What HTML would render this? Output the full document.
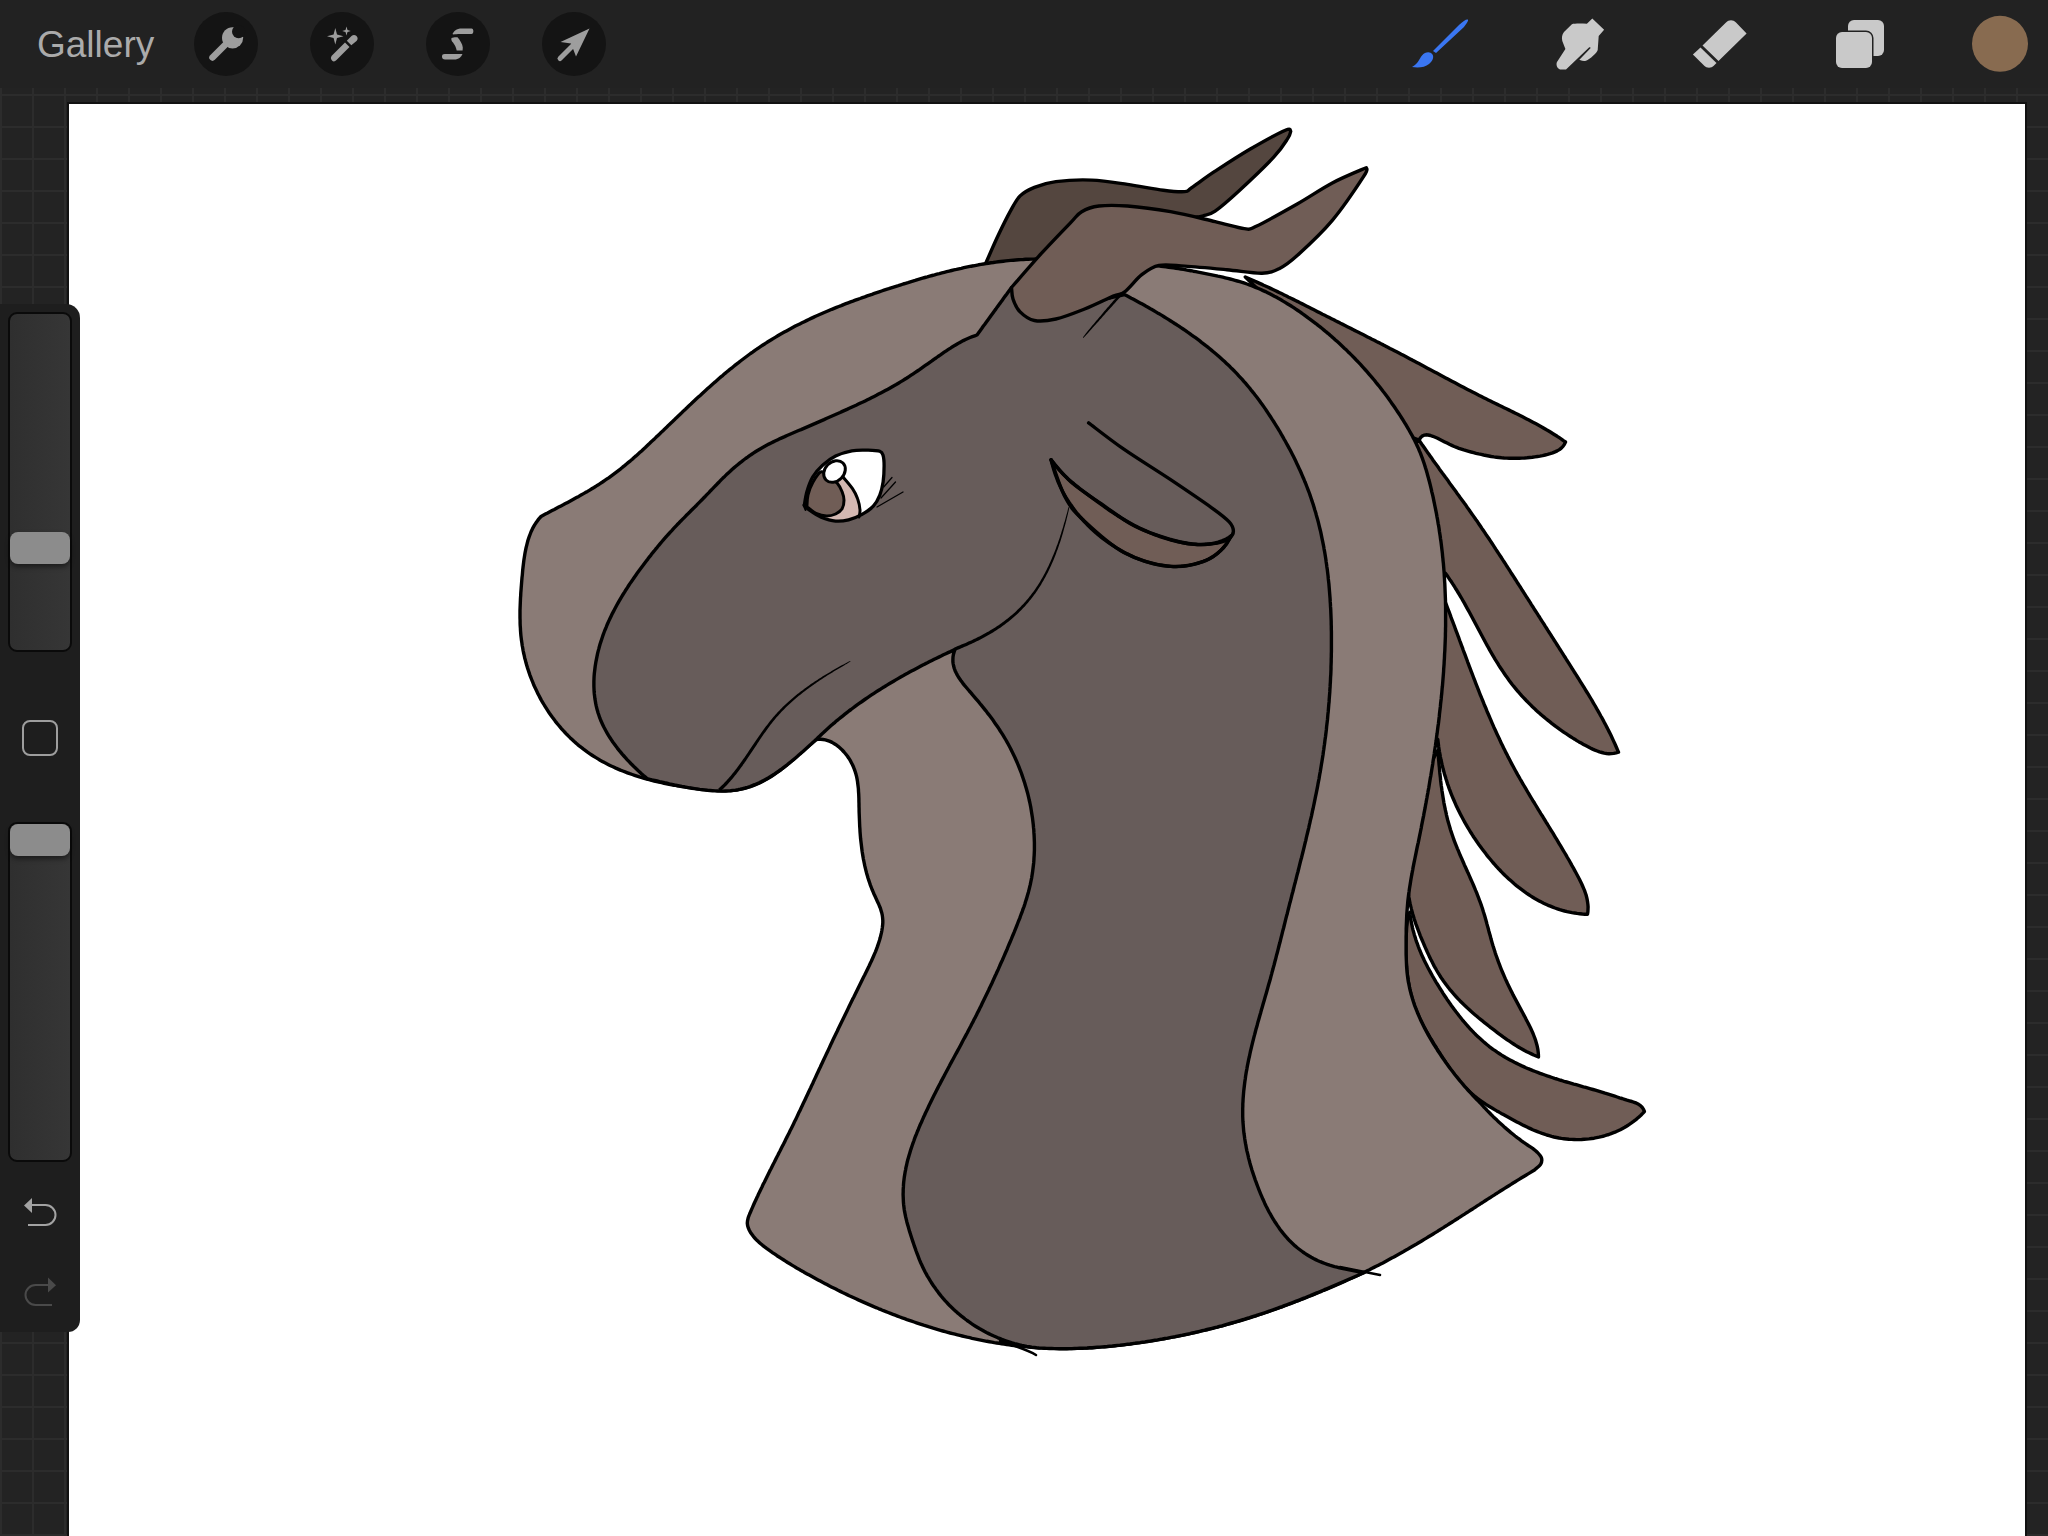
<!DOCTYPE html>
<html><head><meta charset="utf-8">
<style>
html,body{margin:0;padding:0;width:2048px;height:1536px;overflow:hidden;background:#232323;font-family:"Liberation Sans",sans-serif}
#grid{position:absolute;left:0;top:88px;width:2048px;height:1448px;
background-color:#232323;
background-image:linear-gradient(to right, #2c2c2c 2px, transparent 2px),linear-gradient(to bottom, #2c2c2c 2px, transparent 2px);
background-size:32px 32px;background-position:0px 6px}
#canvas{position:absolute;left:69px;top:104px;width:1956px;height:1432px;background:#fff;box-shadow:0 0 0 2px #111}
#top{position:absolute;left:0;top:0;width:2048px;height:88px;background:#222222}
#gal{position:absolute;left:37px;top:24px;font-size:37px;color:#ababab;letter-spacing:0px}
.circ{position:absolute;top:12px;width:64px;height:64px;border-radius:50%;background:#141414}
#side{position:absolute;left:0;top:304px;width:80px;height:1028px;background:#1e1e1e;border-radius:0 14px 12px 0}
.slider{position:absolute;box-sizing:border-box;left:8px;width:64px;border-radius:9px;background:linear-gradient(to right,#2f2f2f,#363636);border:2px solid #0a0a0a}
.thumb{position:absolute;left:10px;width:60px;height:32px;border-radius:8px;background:#8c8c8c;box-shadow:0 3px 5px rgba(0,0,0,.45)}
#sq{position:absolute;left:22px;top:720px;width:32px;height:32px;border:2px solid #9e9e9e;border-radius:8px}
</style></head><body>
<div id="grid"></div>
<div id="canvas"></div>
<svg width="2048" height="1536" viewBox="0 0 2048 1536" style="position:absolute;left:0;top:0">
<g stroke="#000" stroke-width="3.4" stroke-linejoin="round" stroke-linecap="round">
<path d="M1245.3,277.0 L1247.6,278.0 L1249.9,279.0 L1252.2,280.0 L1254.5,281.0 L1256.9,282.1 L1259.1,283.1 L1261.4,284.1 L1263.7,285.2 L1266.0,286.2 L1268.3,287.3 L1270.6,288.4 L1272.9,289.5 L1275.1,290.5 L1277.4,291.6 L1279.7,292.7 L1282.0,293.8 L1284.2,294.9 L1286.5,296.0 L1288.7,297.2 L1291.0,298.3 L1293.3,299.4 L1295.5,300.5 L1297.8,301.6 L1300.0,302.8 L1302.3,303.9 L1304.5,305.0 L1306.8,306.2 L1309.0,307.3 L1311.3,308.5 L1313.5,309.6 L1315.8,310.7 L1318.0,311.9 L1320.3,313.0 L1322.5,314.2 L1324.8,315.3 L1327.0,316.4 L1329.3,317.6 L1331.5,318.7 L1333.8,319.8 L1336.0,321.0 L1338.3,322.1 L1340.5,323.3 L1342.8,324.4 L1345.0,325.5 L1347.3,326.7 L1349.5,327.8 L1351.8,328.9 L1354.0,330.1 L1356.3,331.2 L1358.5,332.3 L1360.8,333.5 L1363.0,334.6 L1365.3,335.8 L1367.5,336.9 L1369.8,338.0 L1372.0,339.2 L1374.3,340.3 L1376.5,341.5 L1378.8,342.6 L1381.0,343.8 L1383.3,344.9 L1385.5,346.1 L1387.8,347.2 L1390.0,348.4 L1392.2,349.5 L1394.5,350.7 L1396.7,351.8 L1399.0,353.0 L1401.2,354.2 L1403.4,355.3 L1405.7,356.5 L1407.9,357.7 L1410.1,358.9 L1412.3,360.1 L1414.6,361.2 L1416.8,362.4 L1419.0,363.6 L1421.2,364.8 L1423.5,366.0 L1425.7,367.2 L1427.9,368.4 L1430.1,369.6 L1432.3,370.7 L1434.6,371.9 L1436.8,373.1 L1439.0,374.3 L1441.2,375.5 L1443.5,376.7 L1445.7,377.9 L1447.9,379.1 L1450.1,380.3 L1452.4,381.5 L1454.6,382.6 L1456.8,383.8 L1459.0,385.0 L1461.3,386.2 L1463.5,387.3 L1465.7,388.5 L1468.0,389.7 L1470.2,390.8 L1472.5,392.0 L1474.7,393.1 L1477.0,394.3 L1479.2,395.4 L1481.5,396.6 L1483.7,397.7 L1486.0,398.8 L1488.2,399.9 L1490.5,401.0 L1492.8,402.2 L1495.0,403.3 L1497.3,404.4 L1499.6,405.5 L1501.8,406.6 L1504.1,407.7 L1506.4,408.8 L1508.7,409.9 L1510.9,411.0 L1513.2,412.1 L1515.4,413.2 L1517.7,414.3 L1520.0,415.5 L1522.2,416.6 L1524.4,417.7 L1526.7,418.9 L1528.9,420.0 L1531.1,421.2 L1533.4,422.4 L1535.6,423.6 L1537.8,424.8 L1540.0,426.0 L1542.2,427.2 L1544.3,428.5 L1546.5,429.8 L1548.7,431.0 L1550.8,432.3 L1553.0,433.7 L1555.1,435.0 L1557.2,436.3 L1559.3,437.7 L1561.4,439.1 L1563.4,440.6 L1565.5,442.0 L1565.5,442.0 L1564.4,444.4 L1563.0,446.4 L1561.3,448.1 L1559.4,449.6 L1557.2,450.9 L1555.0,451.9 L1552.6,452.9 L1550.1,453.7 L1547.6,454.4 L1545.1,455.0 L1542.6,455.6 L1540.0,456.1 L1537.4,456.5 L1534.9,456.9 L1532.3,457.3 L1529.7,457.5 L1527.1,457.8 L1524.6,458.0 L1522.0,458.1 L1519.4,458.2 L1516.9,458.3 L1514.3,458.3 L1511.7,458.3 L1509.2,458.2 L1506.6,458.1 L1504.1,458.0 L1501.5,457.8 L1499.0,457.5 L1496.4,457.2 L1493.9,456.9 L1491.3,456.5 L1488.8,456.0 L1486.2,455.5 L1483.7,455.0 L1481.2,454.4 L1478.6,453.9 L1476.1,453.3 L1473.6,452.6 L1471.2,452.0 L1468.7,451.3 L1466.3,450.6 L1463.8,449.9 L1461.4,449.1 L1459.0,448.3 L1456.6,447.4 L1454.2,446.5 L1451.8,445.4 L1449.4,444.3 L1447.1,443.1 L1444.7,441.9 L1442.3,440.7 L1439.9,439.5 L1437.6,438.3 L1435.2,437.3 L1432.8,436.3 L1430.5,435.5 L1428.2,435.0 L1426.0,434.8 L1424.0,435.2 L1422.1,436.1 L1420.5,437.7 L1419.0,440.0 L1380.0,425.0 L1300.0,330.0 Z" fill="#705d56"/>
<path d="M1419.0,440.0 L1420.4,442.1 L1421.8,444.2 L1423.3,446.3 L1424.7,448.3 L1426.2,450.4 L1427.6,452.5 L1429.1,454.5 L1430.5,456.6 L1432.0,458.6 L1433.4,460.7 L1434.9,462.8 L1436.4,464.8 L1437.9,466.8 L1439.3,468.9 L1440.8,470.9 L1442.3,473.0 L1443.8,475.0 L1445.3,477.1 L1446.8,479.1 L1448.3,481.1 L1449.7,483.2 L1451.2,485.2 L1452.7,487.3 L1454.2,489.3 L1455.7,491.3 L1457.2,493.4 L1458.7,495.4 L1460.1,497.5 L1461.6,499.5 L1463.1,501.5 L1464.6,503.6 L1466.1,505.6 L1467.5,507.7 L1469.0,509.7 L1470.4,511.8 L1471.9,513.9 L1473.3,515.9 L1474.8,518.0 L1476.2,520.1 L1477.7,522.1 L1479.1,524.2 L1480.5,526.3 L1481.9,528.4 L1483.4,530.5 L1484.8,532.6 L1486.2,534.7 L1487.6,536.7 L1489.0,538.8 L1490.4,540.9 L1491.8,543.0 L1493.2,545.1 L1494.6,547.3 L1495.9,549.4 L1497.3,551.5 L1498.7,553.6 L1500.1,555.7 L1501.5,557.8 L1502.8,559.9 L1504.2,562.0 L1505.6,564.2 L1506.9,566.3 L1508.3,568.4 L1509.7,570.5 L1511.0,572.7 L1512.4,574.8 L1513.8,576.9 L1515.1,579.0 L1516.5,581.2 L1517.8,583.3 L1519.2,585.4 L1520.6,587.5 L1521.9,589.7 L1523.3,591.8 L1524.6,593.9 L1526.0,596.1 L1527.4,598.2 L1528.7,600.3 L1530.1,602.4 L1531.4,604.6 L1532.8,606.7 L1534.1,608.8 L1535.5,611.0 L1536.9,613.1 L1538.2,615.2 L1539.6,617.3 L1540.9,619.5 L1542.3,621.6 L1543.7,623.7 L1545.0,625.9 L1546.4,628.0 L1547.7,630.1 L1549.1,632.2 L1550.5,634.4 L1551.8,636.5 L1553.2,638.6 L1554.5,640.8 L1555.9,642.9 L1557.2,645.0 L1558.6,647.2 L1559.9,649.3 L1561.3,651.4 L1562.7,653.6 L1564.0,655.7 L1565.4,657.8 L1566.7,660.0 L1568.1,662.1 L1569.4,664.2 L1570.8,666.4 L1572.1,668.5 L1573.5,670.6 L1574.8,672.8 L1576.2,674.9 L1577.5,677.0 L1578.9,679.2 L1580.2,681.3 L1581.5,683.4 L1582.9,685.6 L1584.2,687.7 L1585.5,689.9 L1586.8,692.0 L1588.2,694.2 L1589.5,696.3 L1590.8,698.5 L1592.1,700.7 L1593.3,702.8 L1594.6,705.0 L1595.9,707.2 L1597.1,709.4 L1598.4,711.6 L1599.6,713.8 L1600.8,716.0 L1602.1,718.2 L1603.3,720.4 L1604.4,722.6 L1605.6,724.8 L1606.8,727.1 L1607.9,729.3 L1609.1,731.6 L1610.2,733.8 L1611.3,736.1 L1612.4,738.4 L1613.4,740.6 L1614.5,742.9 L1615.5,745.2 L1616.5,747.5 L1617.5,749.9 L1618.5,752.2 L1618.5,752.2 L1616.1,752.9 L1613.7,753.4 L1611.4,753.6 L1609.0,753.7 L1606.6,753.5 L1604.2,753.1 L1601.9,752.5 L1599.5,751.9 L1597.2,751.0 L1594.9,750.1 L1592.6,749.1 L1590.3,748.0 L1588.0,746.8 L1585.7,745.6 L1583.5,744.4 L1581.2,743.1 L1579.0,741.9 L1576.8,740.6 L1574.7,739.2 L1572.5,737.9 L1570.3,736.5 L1568.2,735.1 L1566.1,733.7 L1564.0,732.3 L1561.9,730.8 L1559.8,729.4 L1557.8,727.9 L1555.7,726.4 L1553.7,724.8 L1551.7,723.3 L1549.7,721.7 L1547.7,720.1 L1545.7,718.5 L1543.8,716.9 L1541.8,715.2 L1539.9,713.6 L1538.0,711.9 L1536.1,710.2 L1534.3,708.4 L1532.4,706.7 L1530.6,704.9 L1528.8,703.1 L1527.0,701.3 L1525.3,699.5 L1523.5,697.6 L1521.8,695.8 L1520.1,693.9 L1518.5,692.0 L1516.8,690.1 L1515.2,688.1 L1513.6,686.2 L1512.0,684.2 L1510.5,682.2 L1509.0,680.2 L1507.5,678.1 L1506.0,676.1 L1504.6,674.0 L1503.2,671.9 L1501.8,669.8 L1500.4,667.7 L1499.0,665.6 L1497.7,663.4 L1496.4,661.3 L1495.0,659.1 L1493.7,656.9 L1492.5,654.8 L1491.2,652.6 L1489.9,650.4 L1488.7,648.1 L1487.4,645.9 L1486.2,643.7 L1485.0,641.5 L1483.8,639.2 L1482.6,637.0 L1481.4,634.8 L1480.2,632.5 L1479.0,630.3 L1477.8,628.0 L1476.6,625.8 L1475.4,623.5 L1474.2,621.3 L1473.0,619.0 L1471.8,616.8 L1470.6,614.5 L1469.4,612.3 L1468.2,610.1 L1466.9,607.8 L1465.7,605.6 L1464.5,603.4 L1463.2,601.2 L1462.0,599.0 L1460.7,596.8 L1459.4,594.6 L1458.1,592.5 L1456.8,590.3 L1455.4,588.2 L1454.1,586.0 L1452.7,583.9 L1451.4,581.8 L1449.9,579.7 L1448.5,577.6 L1447.1,575.5 L1445.6,573.5 L1400.0,560.0 L1395.0,450.0 Z" fill="#705d56"/>
<path d="M1445.6,602.8 L1446.5,605.1 L1447.4,607.5 L1448.3,609.8 L1449.2,612.2 L1450.1,614.5 L1450.9,616.9 L1451.8,619.3 L1452.7,621.6 L1453.6,624.0 L1454.5,626.3 L1455.3,628.7 L1456.2,631.1 L1457.1,633.4 L1458.0,635.8 L1458.9,638.2 L1459.7,640.5 L1460.6,642.9 L1461.5,645.3 L1462.4,647.6 L1463.2,650.0 L1464.1,652.4 L1465.0,654.7 L1465.9,657.1 L1466.8,659.5 L1467.6,661.8 L1468.5,664.2 L1469.4,666.6 L1470.3,668.9 L1471.2,671.3 L1472.1,673.6 L1473.0,676.0 L1473.9,678.4 L1474.8,680.7 L1475.7,683.1 L1476.6,685.4 L1477.6,687.8 L1478.5,690.1 L1479.4,692.5 L1480.3,694.8 L1481.3,697.2 L1482.2,699.5 L1483.2,701.8 L1484.1,704.2 L1485.1,706.5 L1486.1,708.8 L1487.0,711.2 L1488.0,713.5 L1489.0,715.8 L1490.0,718.1 L1491.0,720.4 L1492.0,722.8 L1493.0,725.1 L1494.0,727.4 L1495.1,729.7 L1496.1,732.0 L1497.1,734.2 L1498.2,736.5 L1499.3,738.8 L1500.3,741.1 L1501.4,743.4 L1502.5,745.6 L1503.6,747.9 L1504.7,750.1 L1505.8,752.4 L1507.0,754.6 L1508.1,756.9 L1509.3,759.1 L1510.4,761.3 L1511.6,763.6 L1512.8,765.8 L1514.0,768.0 L1515.2,770.2 L1516.4,772.4 L1517.6,774.6 L1518.9,776.8 L1520.1,779.0 L1521.4,781.2 L1522.6,783.3 L1523.9,785.5 L1525.2,787.7 L1526.5,789.9 L1527.7,792.0 L1529.0,794.2 L1530.3,796.3 L1531.6,798.5 L1532.9,800.7 L1534.3,802.8 L1535.6,805.0 L1536.9,807.1 L1538.2,809.3 L1539.5,811.4 L1540.8,813.6 L1542.2,815.7 L1543.5,817.9 L1544.8,820.0 L1546.1,822.2 L1547.5,824.3 L1548.8,826.5 L1550.1,828.6 L1551.4,830.8 L1552.8,832.9 L1554.1,835.1 L1555.4,837.3 L1556.7,839.4 L1558.0,841.6 L1559.3,843.8 L1560.6,845.9 L1561.9,848.1 L1563.2,850.3 L1564.5,852.5 L1565.8,854.6 L1567.0,856.8 L1568.3,859.0 L1569.6,861.2 L1570.8,863.4 L1572.0,865.6 L1573.3,867.8 L1574.5,870.1 L1575.7,872.3 L1576.9,874.5 L1578.1,876.8 L1579.3,879.0 L1580.4,881.3 L1581.5,883.5 L1582.5,885.8 L1583.5,888.1 L1584.5,890.4 L1585.3,892.7 L1586.1,895.0 L1586.7,897.4 L1587.2,899.7 L1587.6,902.1 L1587.9,904.5 L1588.1,906.9 L1588.0,909.4 L1587.9,911.8 L1587.5,914.3 L1587.5,914.3 L1584.9,914.2 L1582.3,914.0 L1579.7,913.7 L1577.1,913.4 L1574.6,913.0 L1572.0,912.6 L1569.5,912.1 L1567.1,911.6 L1564.6,911.0 L1562.2,910.3 L1559.8,909.6 L1557.4,908.8 L1555.0,908.0 L1552.7,907.1 L1550.4,906.2 L1548.1,905.3 L1545.8,904.2 L1543.6,903.2 L1541.4,902.1 L1539.2,900.9 L1537.0,899.7 L1534.8,898.5 L1532.7,897.2 L1530.6,895.9 L1528.5,894.5 L1526.4,893.1 L1524.4,891.7 L1522.4,890.2 L1520.4,888.7 L1518.4,887.2 L1516.4,885.6 L1514.5,884.0 L1512.6,882.3 L1510.7,880.6 L1508.8,878.9 L1507.0,877.2 L1505.1,875.5 L1503.3,873.7 L1501.5,871.9 L1499.8,870.0 L1498.0,868.2 L1496.3,866.3 L1494.6,864.4 L1492.9,862.5 L1491.3,860.5 L1489.6,858.5 L1488.0,856.6 L1486.4,854.6 L1484.9,852.6 L1483.3,850.5 L1481.8,848.5 L1480.3,846.4 L1478.8,844.4 L1477.3,842.3 L1475.9,840.2 L1474.4,838.1 L1473.0,836.0 L1471.7,833.8 L1470.3,831.7 L1469.0,829.5 L1467.7,827.3 L1466.4,825.1 L1465.1,822.9 L1463.9,820.7 L1462.7,818.5 L1461.5,816.3 L1460.3,814.0 L1459.2,811.8 L1458.1,809.5 L1457.0,807.2 L1455.9,804.9 L1454.9,802.6 L1453.9,800.3 L1452.9,798.0 L1451.9,795.6 L1451.0,793.3 L1450.1,790.9 L1449.2,788.6 L1448.4,786.2 L1447.5,783.8 L1446.8,781.4 L1446.0,779.0 L1445.3,776.6 L1444.5,774.2 L1443.9,771.8 L1443.2,769.3 L1442.6,766.9 L1442.0,764.4 L1441.5,762.0 L1440.9,759.5 L1440.4,757.0 L1440.0,754.5 L1439.5,752.0 L1439.1,749.5 L1438.7,747.0 L1438.4,744.5 L1438.1,742.0 L1437.8,739.5 L1405.0,720.0 L1410.0,610.0 Z" fill="#705d56"/>
<path d="M1438.0,750.0 L1438.2,752.5 L1438.4,755.0 L1438.5,757.6 L1438.7,760.1 L1438.9,762.6 L1439.1,765.1 L1439.4,767.6 L1439.6,770.2 L1439.8,772.7 L1440.1,775.2 L1440.4,777.7 L1440.6,780.2 L1440.9,782.8 L1441.2,785.3 L1441.6,787.8 L1441.9,790.3 L1442.3,792.8 L1442.7,795.3 L1443.1,797.8 L1443.5,800.3 L1443.9,802.8 L1444.4,805.3 L1444.9,807.7 L1445.4,810.2 L1446.0,812.7 L1446.5,815.1 L1447.1,817.6 L1447.7,820.0 L1448.4,822.4 L1449.1,824.9 L1449.8,827.3 L1450.5,829.7 L1451.3,832.1 L1452.1,834.5 L1452.9,836.8 L1453.7,839.2 L1454.6,841.6 L1455.5,843.9 L1456.5,846.3 L1457.4,848.6 L1458.4,850.9 L1459.4,853.3 L1460.3,855.6 L1461.4,857.9 L1462.4,860.2 L1463.4,862.5 L1464.4,864.9 L1465.5,867.2 L1466.5,869.5 L1467.5,871.8 L1468.6,874.1 L1469.6,876.4 L1470.6,878.7 L1471.7,881.1 L1472.7,883.4 L1473.7,885.7 L1474.7,888.1 L1475.6,890.4 L1476.6,892.7 L1477.5,895.1 L1478.4,897.4 L1479.3,899.8 L1480.2,902.2 L1481.1,904.6 L1481.9,907.0 L1482.7,909.4 L1483.4,911.8 L1484.2,914.2 L1484.9,916.6 L1485.6,919.0 L1486.3,921.5 L1486.9,923.9 L1487.6,926.4 L1488.3,928.8 L1488.9,931.2 L1489.6,933.7 L1490.3,936.1 L1490.9,938.6 L1491.6,941.0 L1492.3,943.4 L1493.0,945.8 L1493.8,948.3 L1494.6,950.7 L1495.3,953.1 L1496.1,955.4 L1497.0,957.8 L1497.8,960.2 L1498.7,962.6 L1499.6,964.9 L1500.5,967.3 L1501.4,969.6 L1502.4,972.0 L1503.4,974.3 L1504.4,976.6 L1505.4,978.9 L1506.5,981.2 L1507.5,983.5 L1508.6,985.8 L1509.7,988.1 L1510.8,990.3 L1512.0,992.6 L1513.1,994.9 L1514.3,997.1 L1515.5,999.4 L1516.7,1001.6 L1517.9,1003.9 L1519.1,1006.1 L1520.3,1008.4 L1521.5,1010.6 L1522.7,1012.8 L1523.9,1015.1 L1525.1,1017.3 L1526.2,1019.6 L1527.4,1021.8 L1528.6,1024.1 L1529.7,1026.3 L1530.8,1028.6 L1531.9,1030.9 L1532.9,1033.2 L1533.8,1035.5 L1534.7,1037.8 L1535.5,1040.1 L1536.2,1042.5 L1536.9,1044.9 L1537.4,1047.2 L1537.9,1049.6 L1538.2,1052.1 L1538.4,1054.5 L1538.5,1057.0 L1538.5,1057.0 L1536.1,1056.0 L1533.7,1055.0 L1531.4,1053.9 L1529.1,1052.8 L1526.8,1051.7 L1524.5,1050.5 L1522.3,1049.2 L1520.1,1048.0 L1517.9,1046.7 L1515.7,1045.4 L1513.6,1044.0 L1511.5,1042.6 L1509.4,1041.2 L1507.3,1039.8 L1505.2,1038.3 L1503.1,1036.8 L1501.1,1035.3 L1499.0,1033.8 L1497.0,1032.3 L1494.9,1030.7 L1492.9,1029.2 L1490.8,1027.6 L1488.8,1026.0 L1486.8,1024.4 L1484.8,1022.9 L1482.8,1021.2 L1480.8,1019.6 L1478.8,1018.0 L1476.8,1016.3 L1474.9,1014.7 L1472.9,1013.0 L1471.0,1011.3 L1469.1,1009.5 L1467.2,1007.8 L1465.3,1006.0 L1463.5,1004.3 L1461.7,1002.5 L1459.9,1000.7 L1458.1,998.8 L1456.4,997.0 L1454.7,995.1 L1453.0,993.2 L1451.3,991.2 L1449.7,989.3 L1448.1,987.3 L1446.6,985.3 L1445.1,983.2 L1443.6,981.2 L1442.1,979.1 L1440.7,977.0 L1439.4,974.9 L1438.0,972.7 L1436.7,970.5 L1435.5,968.3 L1434.2,966.1 L1433.0,963.8 L1431.9,961.6 L1430.7,959.3 L1429.6,957.0 L1428.5,954.6 L1427.4,952.3 L1426.4,950.0 L1425.3,947.6 L1424.3,945.3 L1423.3,942.9 L1422.3,940.5 L1421.3,938.2 L1420.3,935.8 L1419.4,933.4 L1418.5,931.0 L1417.6,928.6 L1416.7,926.2 L1415.8,923.8 L1415.0,921.4 L1414.2,918.9 L1413.5,916.5 L1412.7,914.0 L1412.1,911.6 L1411.4,909.1 L1410.8,906.7 L1410.2,904.2 L1409.7,901.7 L1409.2,899.2 L1408.8,896.7 L1400.0,820.0 Z" fill="#705d56"/>
<path d="M1409.8,912.3 L1410.1,914.9 L1410.5,917.4 L1410.9,919.9 L1411.4,922.5 L1411.9,924.9 L1412.4,927.4 L1413.0,929.9 L1413.7,932.3 L1414.3,934.7 L1415.1,937.1 L1415.8,939.5 L1416.6,941.9 L1417.5,944.2 L1418.3,946.5 L1419.2,948.9 L1420.2,951.2 L1421.1,953.5 L1422.1,955.7 L1423.2,958.0 L1424.2,960.3 L1425.3,962.5 L1426.5,964.8 L1427.6,967.0 L1428.8,969.2 L1430.0,971.4 L1431.2,973.6 L1432.4,975.8 L1433.7,978.0 L1434.9,980.1 L1436.2,982.3 L1437.6,984.5 L1438.9,986.6 L1440.2,988.8 L1441.6,990.9 L1442.9,993.1 L1444.3,995.2 L1445.7,997.3 L1447.1,999.4 L1448.6,1001.5 L1450.0,1003.6 L1451.5,1005.7 L1453.0,1007.7 L1454.5,1009.8 L1456.0,1011.8 L1457.6,1013.8 L1459.1,1015.8 L1460.7,1017.8 L1462.3,1019.8 L1463.9,1021.7 L1465.6,1023.6 L1467.2,1025.5 L1468.9,1027.4 L1470.6,1029.3 L1472.4,1031.1 L1474.1,1032.9 L1475.9,1034.7 L1477.7,1036.4 L1479.5,1038.1 L1481.4,1039.8 L1483.3,1041.5 L1485.2,1043.1 L1487.1,1044.7 L1489.0,1046.3 L1491.0,1047.8 L1493.0,1049.3 L1495.1,1050.7 L1497.1,1052.1 L1499.2,1053.5 L1501.3,1054.9 L1503.5,1056.2 L1505.6,1057.5 L1507.8,1058.7 L1510.0,1059.9 L1512.2,1061.1 L1514.4,1062.3 L1516.7,1063.4 L1519.0,1064.5 L1521.3,1065.6 L1523.6,1066.6 L1525.9,1067.7 L1528.2,1068.7 L1530.6,1069.6 L1532.9,1070.6 L1535.3,1071.5 L1537.7,1072.4 L1540.0,1073.3 L1542.4,1074.2 L1544.8,1075.0 L1547.2,1075.9 L1549.6,1076.7 L1552.1,1077.5 L1554.5,1078.3 L1556.9,1079.0 L1559.3,1079.8 L1561.7,1080.5 L1564.1,1081.3 L1566.6,1082.0 L1569.0,1082.7 L1571.4,1083.4 L1573.8,1084.1 L1576.2,1084.7 L1578.6,1085.4 L1581.0,1086.1 L1583.4,1086.8 L1585.8,1087.4 L1588.2,1088.1 L1590.6,1088.8 L1593.0,1089.5 L1595.4,1090.2 L1597.8,1090.9 L1600.2,1091.6 L1602.6,1092.3 L1605.0,1093.1 L1607.5,1093.8 L1609.9,1094.6 L1612.3,1095.4 L1614.8,1096.2 L1617.2,1097.0 L1619.6,1097.8 L1622.1,1098.5 L1624.5,1099.3 L1627.0,1100.1 L1629.4,1100.8 L1631.9,1101.5 L1634.2,1102.3 L1636.5,1103.2 L1638.6,1104.3 L1640.5,1105.6 L1642.1,1107.2 L1643.4,1109.1 L1644.4,1111.5 L1644.4,1111.5 L1642.7,1113.4 L1640.9,1115.2 L1639.0,1116.9 L1637.1,1118.6 L1635.2,1120.2 L1633.2,1121.7 L1631.1,1123.2 L1629.0,1124.6 L1626.9,1126.0 L1624.8,1127.3 L1622.6,1128.5 L1620.3,1129.7 L1618.1,1130.7 L1615.8,1131.8 L1613.5,1132.7 L1611.1,1133.6 L1608.8,1134.5 L1606.4,1135.2 L1604.0,1136.0 L1601.5,1136.6 L1599.1,1137.2 L1596.6,1137.7 L1594.1,1138.2 L1591.6,1138.5 L1589.1,1138.9 L1586.6,1139.1 L1584.1,1139.3 L1581.6,1139.5 L1579.1,1139.6 L1576.5,1139.6 L1574.0,1139.5 L1571.5,1139.4 L1569.0,1139.3 L1566.4,1139.0 L1563.9,1138.7 L1561.4,1138.4 L1559.0,1138.0 L1556.5,1137.5 L1554.0,1137.0 L1551.6,1136.4 L1549.2,1135.7 L1546.8,1135.0 L1544.4,1134.2 L1542.1,1133.4 L1539.7,1132.5 L1537.4,1131.6 L1535.0,1130.7 L1532.7,1129.7 L1530.4,1128.6 L1528.1,1127.6 L1525.9,1126.5 L1523.6,1125.4 L1521.3,1124.2 L1519.1,1123.1 L1516.8,1121.9 L1514.6,1120.7 L1512.3,1119.5 L1510.1,1118.3 L1507.9,1117.1 L1505.6,1115.8 L1503.4,1114.6 L1501.2,1113.4 L1499.0,1112.1 L1496.8,1110.9 L1494.6,1109.6 L1492.4,1108.3 L1490.2,1107.0 L1488.1,1105.7 L1486.0,1104.4 L1483.9,1103.0 L1481.9,1101.6 L1479.8,1100.1 L1477.8,1098.7 L1475.9,1097.1 L1473.9,1095.6 L1472.1,1094.0 L1470.2,1092.3 L1468.4,1090.6 L1466.6,1088.9 L1464.9,1087.1 L1463.2,1085.3 L1461.6,1083.5 L1459.9,1081.6 L1458.3,1079.7 L1456.8,1077.7 L1455.2,1075.8 L1453.7,1073.7 L1452.2,1071.7 L1450.7,1069.7 L1449.3,1067.6 L1447.8,1065.5 L1446.4,1063.4 L1445.0,1061.3 L1443.6,1059.1 L1442.2,1057.0 L1440.8,1054.9 L1439.5,1052.7 L1438.1,1050.6 L1436.7,1048.4 L1435.4,1046.2 L1434.0,1044.1 L1432.7,1041.9 L1431.4,1039.7 L1430.0,1037.6 L1428.8,1035.4 L1427.5,1033.2 L1426.2,1031.0 L1425.0,1028.8 L1423.8,1026.6 L1422.6,1024.3 L1421.5,1022.1 L1420.4,1019.8 L1419.3,1017.6 L1418.3,1015.3 L1417.3,1013.0 L1416.4,1010.7 L1415.5,1008.3 L1414.6,1006.0 L1413.8,1003.6 L1413.0,1001.2 L1412.3,998.8 L1411.6,996.4 L1411.0,994.0 L1410.4,991.6 L1409.8,989.1 L1409.3,986.7 L1408.9,984.2 L1408.4,981.7 L1408.0,979.2 L1407.7,976.8 L1407.3,974.3 L1407.1,971.7 L1406.8,969.2 L1406.6,966.7 L1406.4,964.2 L1406.2,961.6 L1406.1,959.1 L1406.0,956.6 L1405.9,954.0 L1405.9,951.5 L1405.9,949.0 L1405.9,946.4 L1405.9,943.9 L1406.0,941.4 L1406.1,938.8 L1406.2,936.3 L1406.3,933.8 L1406.5,931.2 L1406.6,928.7 L1406.8,926.2 L1407.1,923.7 L1407.3,921.2 L1407.5,918.7 L1407.8,916.3 Z" fill="#705d56"/>
<path d="M985.8,263.2 C987.9,258.4 994.5,243.2 998.6,234.6 C1002.7,226.0 1006.5,218.1 1010.1,211.7 C1013.7,205.2 1016.0,200.0 1020.1,195.9 C1024.2,191.8 1028.4,189.7 1034.4,187.3 C1040.4,184.9 1046.4,182.8 1055.9,181.6 C1065.5,180.4 1079.8,179.6 1091.7,180.1 C1103.6,180.6 1115.6,182.7 1127.5,184.4 C1139.4,186.1 1153.8,189.0 1163.3,190.2 C1172.8,191.4 1180.1,192.0 1184.8,191.6 C1189.5,191.2 1186.7,191.0 1191.7,187.6 C1196.8,184.2 1205.3,177.6 1215.1,171.2 C1224.9,164.8 1238.6,155.8 1250.3,149.0 C1262.0,142.2 1278.7,133.1 1285.4,130.2 C1292.1,127.3 1289.8,131.2 1290.7,131.4 L1290.7,131.4 C1290.2,132.6 1290.6,134.1 1287.8,138.4 C1285.0,142.7 1281.9,148.4 1273.7,157.2 C1265.5,166.0 1248.4,182.2 1238.6,191.2 C1228.8,200.2 1221.0,207.0 1215.1,211.1 C1209.2,215.2 1206.3,214.8 1203.4,215.8 C1200.5,216.8 1198.6,216.8 1197.6,217.0 L1100.0,240.0 L1000.0,275.0 Z" fill="#54463f"/>
<path d="M1036.0,259.0 L1033.5,259.1 L1030.9,259.1 L1028.4,259.2 L1025.9,259.3 L1023.4,259.5 L1020.8,259.6 L1018.3,259.8 L1015.8,260.0 L1013.3,260.2 L1010.8,260.4 L1008.3,260.6 L1005.8,260.9 L1003.3,261.2 L1000.8,261.5 L998.3,261.8 L995.8,262.1 L993.4,262.5 L990.9,262.8 L988.4,263.2 L985.9,263.6 L983.5,264.0 L981.0,264.4 L978.5,264.8 L976.1,265.3 L973.6,265.8 L971.2,266.2 L968.7,266.7 L966.3,267.2 L963.8,267.7 L961.4,268.3 L958.9,268.8 L956.5,269.4 L954.0,269.9 L951.6,270.5 L949.2,271.1 L946.7,271.7 L944.3,272.3 L941.9,272.9 L939.4,273.6 L937.0,274.2 L934.6,274.9 L932.2,275.5 L929.7,276.2 L927.3,276.9 L924.9,277.5 L922.5,278.2 L920.1,278.9 L917.6,279.6 L915.2,280.4 L912.8,281.1 L910.4,281.8 L908.0,282.6 L905.6,283.3 L903.2,284.0 L900.8,284.8 L898.4,285.6 L896.0,286.3 L893.6,287.1 L891.2,287.9 L888.8,288.7 L886.4,289.4 L884.0,290.2 L881.6,291.0 L879.2,291.8 L876.8,292.6 L874.4,293.4 L872.0,294.3 L869.6,295.1 L867.2,295.9 L864.8,296.8 L862.4,297.6 L860.1,298.5 L857.7,299.3 L855.3,300.2 L852.9,301.1 L850.6,301.9 L848.2,302.8 L845.9,303.7 L843.5,304.6 L841.2,305.6 L838.8,306.5 L836.5,307.4 L834.1,308.4 L831.8,309.3 L829.5,310.3 L827.2,311.3 L824.8,312.3 L822.5,313.3 L820.2,314.3 L817.9,315.3 L815.6,316.3 L813.3,317.4 L811.1,318.4 L808.8,319.5 L806.5,320.6 L804.3,321.7 L802.0,322.8 L799.8,323.9 L797.5,325.0 L795.3,326.1 L793.1,327.3 L790.9,328.5 L788.7,329.7 L786.5,330.9 L784.3,332.1 L782.1,333.3 L779.9,334.5 L777.8,335.8 L775.6,337.1 L773.5,338.4 L771.3,339.7 L769.2,341.0 L767.1,342.3 L765.0,343.7 L762.9,345.0 L760.8,346.4 L758.7,347.8 L756.7,349.2 L754.6,350.6 L752.6,352.1 L750.5,353.5 L748.5,355.0 L746.5,356.5 L744.5,358.0 L742.5,359.5 L740.5,361.0 L738.5,362.6 L736.5,364.1 L734.5,365.7 L732.6,367.3 L730.6,368.8 L728.7,370.4 L726.7,372.0 L724.8,373.6 L722.9,375.3 L720.9,376.9 L719.0,378.5 L717.1,380.2 L715.2,381.9 L713.3,383.5 L711.4,385.2 L709.5,386.9 L707.6,388.6 L705.8,390.2 L703.9,391.9 L702.0,393.7 L700.2,395.4 L698.3,397.1 L696.4,398.8 L694.6,400.5 L692.7,402.3 L690.9,404.0 L689.0,405.7 L687.2,407.5 L685.4,409.2 L683.5,410.9 L681.7,412.7 L679.9,414.4 L678.0,416.2 L676.2,417.9 L674.4,419.7 L672.6,421.4 L670.7,423.2 L668.9,424.9 L667.1,426.7 L665.3,428.4 L663.5,430.2 L661.6,431.9 L659.8,433.7 L658.0,435.4 L656.2,437.1 L654.4,438.9 L652.6,440.6 L650.7,442.3 L648.9,444.1 L647.1,445.8 L645.3,447.5 L643.4,449.2 L641.6,450.9 L639.7,452.6 L637.9,454.2 L636.0,455.9 L634.1,457.5 L632.3,459.2 L630.4,460.8 L628.4,462.4 L626.5,464.0 L624.6,465.6 L622.6,467.2 L620.7,468.8 L618.7,470.3 L616.7,471.8 L614.7,473.3 L612.7,474.8 L610.7,476.3 L608.7,477.8 L606.6,479.2 L604.5,480.6 L602.5,482.0 L600.4,483.4 L598.3,484.8 L596.1,486.1 L594.0,487.5 L591.8,488.8 L589.7,490.1 L587.5,491.4 L585.3,492.6 L583.1,493.9 L581.0,495.1 L578.8,496.4 L576.5,497.6 L574.3,498.8 L572.1,500.0 L569.9,501.2 L567.7,502.4 L565.4,503.6 L563.2,504.8 L561.0,505.9 L558.7,507.1 L556.5,508.3 L554.3,509.5 L552.1,510.6 L549.8,511.8 L547.6,513.0 L545.4,514.1 L543.2,515.3 L541.0,516.5 L541.0,516.5 L539.3,518.4 L537.7,520.4 L536.2,522.5 L534.8,524.6 L533.6,526.7 L532.4,528.9 L531.3,531.2 L530.4,533.5 L529.5,535.8 L528.7,538.1 L527.9,540.5 L527.3,542.9 L526.7,545.3 L526.1,547.7 L525.6,550.2 L525.1,552.6 L524.7,555.1 L524.3,557.6 L523.9,560.0 L523.6,562.5 L523.3,565.0 L523.0,567.5 L522.7,570.1 L522.5,572.6 L522.3,575.1 L522.0,577.6 L521.8,580.1 L521.6,582.7 L521.4,585.2 L521.2,587.7 L521.0,590.3 L520.8,592.8 L520.7,595.3 L520.5,597.8 L520.4,600.4 L520.3,602.9 L520.2,605.4 L520.1,607.9 L520.0,610.5 L520.0,613.0 L520.0,615.5 L520.0,618.0 L520.1,620.5 L520.1,623.1 L520.2,625.6 L520.4,628.1 L520.5,630.6 L520.7,633.1 L520.9,635.6 L521.2,638.1 L521.5,640.6 L521.9,643.1 L522.2,645.5 L522.7,648.0 L523.1,650.5 L523.6,653.0 L524.2,655.4 L524.7,657.9 L525.4,660.3 L526.0,662.8 L526.7,665.2 L527.4,667.6 L528.2,670.0 L529.0,672.4 L529.8,674.8 L530.7,677.2 L531.6,679.5 L532.6,681.9 L533.5,684.2 L534.5,686.5 L535.6,688.8 L536.7,691.1 L537.8,693.4 L538.9,695.6 L540.1,697.9 L541.3,700.1 L542.6,702.3 L543.9,704.5 L545.2,706.6 L546.5,708.7 L547.9,710.9 L549.3,713.0 L550.7,715.0 L552.2,717.1 L553.7,719.1 L555.2,721.1 L556.8,723.1 L558.4,725.0 L560.0,726.9 L561.6,728.8 L563.3,730.7 L565.0,732.5 L566.7,734.3 L568.5,736.1 L570.3,737.9 L572.1,739.6 L573.9,741.3 L575.8,742.9 L577.7,744.6 L579.6,746.2 L581.6,747.7 L583.5,749.2 L585.5,750.7 L587.5,752.2 L589.6,753.6 L591.7,755.0 L593.7,756.3 L595.9,757.6 L598.0,758.9 L600.1,760.2 L602.3,761.4 L604.5,762.6 L606.7,763.7 L609.0,764.9 L611.2,766.0 L613.5,767.0 L615.8,768.1 L618.1,769.1 L620.4,770.1 L622.7,771.0 L625.1,771.9 L627.4,772.8 L629.8,773.7 L632.2,774.5 L634.6,775.3 L637.0,776.1 L639.4,776.9 L641.9,777.6 L644.3,778.4 L646.8,779.1 L649.2,779.7 L651.7,780.4 L654.2,781.0 L656.7,781.6 L659.1,782.2 L661.6,782.7 L664.1,783.3 L666.6,783.8 L669.2,784.3 L671.7,784.8 L674.2,785.2 L676.7,785.7 L679.2,786.1 L681.7,786.5 L684.3,786.9 L686.8,787.3 L689.3,787.6 L691.8,787.9 L694.3,788.3 L696.8,788.6 L699.3,788.9 L701.9,789.1 L704.4,789.4 L706.9,789.7 L709.3,789.9 L711.8,790.1 L714.3,790.3 L716.8,790.5 L719.2,790.6 L721.7,790.7 L724.2,790.7 L726.6,790.7 L729.1,790.6 L731.5,790.5 L733.9,790.3 L736.4,790.0 L738.8,789.6 L741.2,789.1 L743.6,788.6 L746.0,787.9 L748.4,787.2 L750.8,786.5 L753.2,785.6 L755.5,784.7 L757.8,783.7 L760.1,782.6 L762.4,781.5 L764.6,780.3 L766.9,779.1 L769.1,777.8 L771.2,776.5 L773.3,775.1 L775.4,773.6 L777.5,772.2 L779.6,770.7 L781.6,769.1 L783.6,767.6 L785.6,766.0 L787.6,764.3 L789.5,762.7 L791.5,761.1 L793.4,759.4 L795.3,757.7 L797.2,756.0 L799.1,754.3 L801.0,752.7 L802.9,751.0 L804.8,749.3 L806.7,747.6 L808.6,746.0 L810.4,744.4 L812.3,742.8 L814.2,741.2 L816.1,739.6 L816.1,739.6 L818.5,739.3 L820.8,739.3 L823.1,739.5 L825.4,739.9 L827.7,740.6 L830.0,741.4 L832.1,742.4 L834.3,743.7 L836.4,745.0 L838.4,746.6 L840.3,748.3 L842.2,750.0 L844.0,752.0 L845.7,754.0 L847.3,756.0 L848.8,758.2 L850.2,760.4 L851.4,762.7 L852.6,765.0 L853.6,767.3 L854.5,769.6 L855.3,772.0 L856.0,774.3 L856.6,776.7 L857.1,779.1 L857.5,781.5 L857.8,784.0 L858.1,786.4 L858.4,788.9 L858.5,791.3 L858.7,793.8 L858.8,796.3 L858.9,798.8 L858.9,801.3 L859.0,803.8 L859.0,806.3 L859.1,808.8 L859.1,811.3 L859.2,813.8 L859.3,816.3 L859.4,818.8 L859.5,821.3 L859.6,823.8 L859.7,826.3 L859.9,828.8 L860.0,831.3 L860.2,833.8 L860.4,836.3 L860.6,838.8 L860.9,841.3 L861.2,843.8 L861.5,846.3 L861.8,848.7 L862.1,851.2 L862.5,853.7 L862.9,856.1 L863.3,858.6 L863.8,861.0 L864.3,863.5 L864.8,865.9 L865.4,868.3 L866.0,870.8 L866.6,873.2 L867.3,875.6 L868.0,878.0 L868.8,880.4 L869.6,882.7 L870.4,885.1 L871.3,887.5 L872.2,889.8 L873.2,892.1 L874.2,894.5 L875.3,896.8 L876.3,899.1 L877.4,901.4 L878.5,903.7 L879.4,906.0 L880.4,908.3 L881.1,910.7 L881.8,913.0 L882.3,915.4 L882.6,917.9 L882.8,920.3 L882.8,922.8 L882.6,925.3 L882.3,927.8 L881.9,930.3 L881.4,932.9 L880.8,935.3 L880.2,937.8 L879.5,940.3 L878.7,942.7 L877.9,945.1 L877.1,947.4 L876.2,949.8 L875.3,952.1 L874.3,954.4 L873.3,956.7 L872.3,959.0 L871.3,961.3 L870.2,963.6 L869.2,965.8 L868.1,968.0 L867.0,970.3 L865.9,972.5 L864.8,974.8 L863.6,977.0 L862.5,979.2 L861.4,981.5 L860.3,983.7 L859.2,985.9 L858.1,988.2 L857.0,990.4 L855.9,992.7 L854.8,994.9 L853.7,997.2 L852.5,999.4 L851.4,1001.7 L850.3,1003.9 L849.2,1006.2 L848.2,1008.4 L847.1,1010.7 L846.0,1012.9 L844.9,1015.2 L843.8,1017.4 L842.7,1019.7 L841.6,1021.9 L840.5,1024.2 L839.4,1026.5 L838.3,1028.7 L837.3,1031.0 L836.2,1033.3 L835.1,1035.5 L834.0,1037.8 L832.9,1040.1 L831.9,1042.3 L830.8,1044.6 L829.7,1046.9 L828.7,1049.1 L827.6,1051.4 L826.5,1053.7 L825.5,1055.9 L824.4,1058.2 L823.3,1060.5 L822.3,1062.7 L821.2,1065.0 L820.2,1067.3 L819.1,1069.6 L818.1,1071.8 L817.0,1074.1 L815.9,1076.4 L814.9,1078.6 L813.8,1080.9 L812.8,1083.2 L811.7,1085.4 L810.7,1087.7 L809.6,1090.0 L808.5,1092.3 L807.5,1094.5 L806.4,1096.8 L805.4,1099.0 L804.3,1101.3 L803.2,1103.6 L802.2,1105.8 L801.1,1108.1 L800.0,1110.4 L798.9,1112.6 L797.8,1114.9 L796.8,1117.1 L795.7,1119.4 L794.6,1121.6 L793.5,1123.9 L792.4,1126.2 L791.3,1128.4 L790.2,1130.6 L789.1,1132.9 L788.0,1135.1 L786.8,1137.4 L785.7,1139.6 L784.6,1141.9 L783.5,1144.1 L782.3,1146.3 L781.2,1148.6 L780.1,1150.8 L778.9,1153.0 L777.8,1155.3 L776.6,1157.5 L775.5,1159.8 L774.4,1162.0 L773.2,1164.2 L772.1,1166.5 L771.0,1168.7 L769.8,1170.9 L768.7,1173.2 L767.6,1175.4 L766.5,1177.7 L765.4,1179.9 L764.3,1182.2 L763.1,1184.4 L762.1,1186.7 L761.0,1188.9 L759.9,1191.2 L758.8,1193.4 L757.8,1195.7 L756.7,1198.0 L755.7,1200.2 L754.6,1202.5 L753.6,1204.8 L752.6,1207.1 L751.6,1209.4 L750.6,1211.7 L749.6,1214.0 L748.7,1216.3 L748.0,1218.6 L747.5,1220.9 L747.3,1223.2 L747.6,1225.5 L748.3,1227.9 L749.3,1230.2 L750.5,1232.4 L752.0,1234.5 L753.5,1236.6 L755.2,1238.5 L756.9,1240.3 L758.8,1242.1 L760.7,1243.7 L762.6,1245.3 L764.6,1246.9 L766.6,1248.4 L768.7,1249.9 L770.8,1251.4 L772.8,1252.8 L774.9,1254.2 L777.0,1255.7 L779.1,1257.0 L781.2,1258.4 L783.4,1259.8 L785.5,1261.1 L787.6,1262.5 L789.8,1263.8 L791.9,1265.1 L794.1,1266.4 L796.2,1267.7 L798.4,1268.9 L800.6,1270.2 L802.8,1271.4 L804.9,1272.7 L807.1,1273.9 L809.3,1275.1 L811.5,1276.3 L813.7,1277.5 L815.9,1278.7 L818.1,1279.9 L820.3,1281.1 L822.5,1282.3 L824.7,1283.4 L826.9,1284.6 L829.1,1285.8 L831.3,1286.9 L833.6,1288.0 L835.8,1289.1 L838.0,1290.3 L840.3,1291.4 L842.5,1292.5 L844.7,1293.5 L847.0,1294.6 L849.2,1295.7 L851.5,1296.7 L853.8,1297.8 L856.0,1298.8 L858.3,1299.9 L860.6,1300.9 L862.8,1301.9 L865.1,1302.9 L867.4,1303.9 L869.7,1304.9 L872.0,1305.9 L874.3,1306.9 L876.6,1307.8 L878.9,1308.8 L881.2,1309.7 L883.5,1310.7 L885.9,1311.6 L888.2,1312.5 L890.5,1313.4 L892.9,1314.3 L895.2,1315.2 L897.5,1316.1 L899.9,1317.0 L902.2,1317.9 L904.6,1318.7 L907.0,1319.6 L909.3,1320.4 L911.7,1321.2 L914.1,1322.0 L916.5,1322.8 L918.8,1323.6 L921.2,1324.4 L923.6,1325.2 L926.0,1325.9 L928.4,1326.7 L930.8,1327.4 L933.2,1328.2 L935.6,1328.9 L938.0,1329.6 L940.5,1330.3 L942.9,1331.0 L945.3,1331.7 L947.7,1332.3 L950.2,1333.0 L952.6,1333.6 L955.0,1334.2 L957.5,1334.8 L959.9,1335.4 L962.3,1336.0 L964.8,1336.6 L967.2,1337.2 L969.7,1337.7 L972.1,1338.3 L974.6,1338.8 L977.1,1339.3 L979.5,1339.8 L982.0,1340.3 L984.4,1340.8 L986.9,1341.3 L989.4,1341.7 L991.8,1342.1 L994.3,1342.6 L996.8,1343.0 L999.3,1343.4 L1001.7,1343.8 L1004.2,1344.1 L1006.7,1344.5 L1009.2,1344.8 L1011.7,1345.2 L1014.2,1345.5 L1016.6,1345.8 L1019.1,1346.0 L1021.6,1346.3 L1024.1,1346.6 L1026.6,1346.8 L1029.1,1347.0 L1031.6,1347.2 L1034.1,1347.4 L1036.6,1347.6 L1039.0,1347.8 L1041.5,1347.9 L1044.0,1348.1 L1046.5,1348.2 L1049.0,1348.3 L1051.5,1348.4 L1054.0,1348.4 L1056.5,1348.5 L1059.0,1348.5 L1061.5,1348.5 L1064.0,1348.6 L1066.5,1348.5 L1069.0,1348.5 L1071.5,1348.5 L1074.0,1348.4 L1076.5,1348.4 L1079.0,1348.3 L1081.5,1348.2 L1084.0,1348.1 L1086.5,1348.0 L1089.0,1347.8 L1091.5,1347.7 L1093.9,1347.5 L1096.4,1347.3 L1098.9,1347.1 L1101.4,1346.9 L1103.9,1346.7 L1106.4,1346.5 L1108.9,1346.3 L1111.4,1346.0 L1113.9,1345.8 L1116.4,1345.5 L1118.9,1345.2 L1121.4,1345.0 L1123.8,1344.7 L1126.3,1344.4 L1128.8,1344.0 L1131.3,1343.7 L1133.8,1343.4 L1136.3,1343.0 L1138.8,1342.7 L1141.2,1342.3 L1143.7,1342.0 L1146.2,1341.6 L1148.7,1341.2 L1151.2,1340.8 L1153.6,1340.4 L1156.1,1340.0 L1158.6,1339.6 L1161.1,1339.2 L1163.5,1338.7 L1166.0,1338.3 L1168.5,1337.9 L1170.9,1337.4 L1173.4,1336.9 L1175.9,1336.5 L1178.3,1336.0 L1180.8,1335.5 L1183.2,1335.0 L1185.7,1334.5 L1188.2,1334.0 L1190.6,1333.4 L1193.1,1332.9 L1195.5,1332.4 L1198.0,1331.8 L1200.4,1331.2 L1202.8,1330.7 L1205.3,1330.1 L1207.7,1329.5 L1210.2,1328.9 L1212.6,1328.3 L1215.0,1327.7 L1217.4,1327.0 L1219.9,1326.4 L1222.3,1325.8 L1224.7,1325.1 L1227.1,1324.4 L1229.5,1323.8 L1231.9,1323.1 L1234.3,1322.4 L1236.7,1321.7 L1239.1,1321.0 L1241.5,1320.3 L1243.9,1319.5 L1246.3,1318.8 L1248.7,1318.1 L1251.1,1317.3 L1253.5,1316.5 L1255.9,1315.8 L1258.2,1315.0 L1260.6,1314.2 L1263.0,1313.4 L1265.3,1312.6 L1267.7,1311.8 L1270.1,1311.0 L1272.4,1310.1 L1274.8,1309.3 L1277.2,1308.5 L1279.5,1307.6 L1281.9,1306.8 L1284.2,1305.9 L1286.6,1305.0 L1288.9,1304.2 L1291.2,1303.3 L1293.6,1302.4 L1295.9,1301.5 L1298.3,1300.6 L1300.6,1299.7 L1302.9,1298.8 L1305.3,1297.9 L1307.6,1296.9 L1309.9,1296.0 L1312.2,1295.1 L1314.6,1294.1 L1316.9,1293.2 L1319.2,1292.2 L1321.5,1291.3 L1323.8,1290.3 L1326.1,1289.4 L1328.5,1288.4 L1330.8,1287.4 L1333.1,1286.4 L1335.4,1285.4 L1337.7,1284.4 L1340.0,1283.4 L1342.2,1282.4 L1344.5,1281.4 L1346.8,1280.3 L1349.1,1279.3 L1351.4,1278.3 L1353.7,1277.2 L1355.9,1276.2 L1358.2,1275.1 L1360.5,1274.0 L1362.7,1272.9 L1365.0,1271.9 L1367.2,1270.8 L1369.5,1269.7 L1371.7,1268.5 L1374.0,1267.4 L1376.2,1266.3 L1378.4,1265.2 L1380.7,1264.0 L1382.9,1262.9 L1385.1,1261.7 L1387.3,1260.5 L1389.5,1259.3 L1391.7,1258.1 L1393.9,1257.0 L1396.1,1255.7 L1398.3,1254.5 L1400.5,1253.3 L1402.7,1252.1 L1404.8,1250.8 L1407.0,1249.6 L1409.2,1248.3 L1411.3,1247.1 L1413.5,1245.8 L1415.7,1244.6 L1417.8,1243.3 L1420.0,1242.0 L1422.1,1240.7 L1424.2,1239.4 L1426.4,1238.1 L1428.5,1236.8 L1430.7,1235.5 L1432.8,1234.2 L1434.9,1232.9 L1437.1,1231.6 L1439.2,1230.2 L1441.3,1228.9 L1443.4,1227.6 L1445.5,1226.2 L1447.7,1224.9 L1449.8,1223.5 L1451.9,1222.2 L1454.0,1220.9 L1456.1,1219.5 L1458.2,1218.2 L1460.3,1216.8 L1462.5,1215.4 L1464.6,1214.1 L1466.7,1212.7 L1468.8,1211.4 L1470.9,1210.0 L1473.0,1208.7 L1475.1,1207.3 L1477.2,1205.9 L1479.3,1204.6 L1481.4,1203.2 L1483.5,1201.9 L1485.6,1200.5 L1487.7,1199.1 L1489.9,1197.8 L1492.0,1196.4 L1494.1,1195.1 L1496.2,1193.7 L1498.3,1192.4 L1500.4,1191.0 L1502.5,1189.7 L1504.6,1188.4 L1506.8,1187.0 L1508.9,1185.7 L1511.0,1184.4 L1513.1,1183.0 L1515.3,1181.7 L1517.4,1180.4 L1519.5,1179.1 L1521.6,1177.8 L1523.8,1176.5 L1525.9,1175.2 L1528.1,1173.9 L1530.2,1172.6 L1532.4,1171.3 L1534.5,1170.0 L1534.5,1170.0 C1535.5,1169.0 1539.4,1166.3 1540.6,1164.3 C1541.8,1162.3 1542.1,1160.1 1541.5,1158.1 C1540.9,1156.0 1538.5,1153.6 1537.0,1152.0 C1535.5,1150.4 1533.4,1149.0 1532.7,1148.4 L1532.7,1148.4 L1530.4,1146.9 L1528.2,1145.5 L1525.9,1143.9 L1523.7,1142.4 L1521.5,1140.8 L1519.4,1139.2 L1517.2,1137.6 L1515.1,1136.0 L1513.0,1134.3 L1510.9,1132.6 L1508.9,1130.9 L1506.8,1129.1 L1504.8,1127.4 L1502.8,1125.6 L1500.8,1123.8 L1498.8,1122.0 L1496.9,1120.1 L1494.9,1118.2 L1493.0,1116.4 L1491.1,1114.5 L1489.2,1112.5 L1487.3,1110.6 L1485.5,1108.6 L1483.6,1106.7 L1481.8,1104.7 L1480.0,1102.7 L1480.0,1102.7 L1478.2,1100.9 L1476.5,1099.2 L1474.7,1097.4 L1473.0,1095.6 L1471.3,1093.7 L1469.6,1091.9 L1467.9,1090.0 L1466.3,1088.2 L1464.6,1086.3 L1463.0,1084.4 L1461.4,1082.5 L1459.8,1080.6 L1458.2,1078.6 L1456.6,1076.7 L1455.0,1074.7 L1453.5,1072.7 L1452.0,1070.8 L1450.4,1068.8 L1448.9,1066.7 L1447.5,1064.7 L1446.0,1062.7 L1444.5,1060.6 L1443.1,1058.6 L1441.7,1056.5 L1440.3,1054.4 L1438.9,1052.3 L1437.5,1050.2 L1436.2,1048.0 L1434.8,1045.9 L1433.5,1043.8 L1432.2,1041.6 L1430.9,1039.4 L1429.7,1037.3 L1428.4,1035.1 L1427.2,1032.9 L1426.0,1030.6 L1424.8,1028.4 L1423.7,1026.2 L1422.6,1023.9 L1421.5,1021.7 L1420.4,1019.4 L1419.4,1017.1 L1418.4,1014.8 L1417.4,1012.5 L1416.5,1010.2 L1415.6,1007.9 L1414.7,1005.6 L1413.9,1003.2 L1413.1,1000.8 L1412.4,998.5 L1411.7,996.1 L1411.0,993.7 L1410.4,991.3 L1409.8,988.9 L1409.3,986.5 L1408.8,984.0 L1408.3,981.6 L1407.9,979.1 L1407.6,976.7 L1407.3,974.2 L1407.0,971.7 L1406.8,969.2 L1406.6,966.7 L1406.5,964.2 L1406.4,961.7 L1406.3,959.2 L1406.2,956.7 L1406.1,954.1 L1406.1,951.6 L1406.1,949.1 L1406.1,946.6 L1406.1,944.0 L1406.1,941.5 L1406.1,939.0 L1406.1,936.5 L1406.2,933.9 L1406.2,931.4 L1406.2,928.9 L1406.3,926.4 L1406.4,923.9 L1406.5,921.4 L1406.6,918.9 L1406.7,916.4 L1406.8,913.9 L1407.0,911.4 L1407.2,908.9 L1407.4,906.4 L1407.6,903.9 L1407.8,901.4 L1408.1,898.9 L1408.4,896.4 L1408.7,894.0 L1409.1,891.5 L1409.4,889.0 L1409.8,886.5 L1410.2,884.1 L1410.6,881.6 L1411.0,879.1 L1411.4,876.7 L1411.9,874.2 L1412.3,871.8 L1412.8,869.3 L1413.2,866.8 L1413.7,864.4 L1414.2,861.9 L1414.7,859.5 L1415.2,857.0 L1415.7,854.6 L1416.2,852.1 L1416.7,849.7 L1417.2,847.2 L1417.7,844.8 L1418.3,842.3 L1418.8,839.8 L1419.3,837.4 L1419.8,834.9 L1420.3,832.5 L1420.8,830.0 L1421.3,827.6 L1421.7,825.1 L1422.2,822.6 L1422.7,820.2 L1423.2,817.7 L1423.7,815.3 L1424.1,812.8 L1424.6,810.3 L1425.1,807.9 L1425.5,805.4 L1426.0,802.9 L1426.4,800.5 L1426.9,798.0 L1427.3,795.5 L1427.8,793.1 L1428.2,790.6 L1428.7,788.1 L1429.1,785.7 L1429.5,783.2 L1429.9,780.7 L1430.3,778.2 L1430.8,775.8 L1431.2,773.3 L1431.6,770.8 L1432.0,768.3 L1432.4,765.9 L1432.8,763.4 L1433.1,760.9 L1433.5,758.4 L1433.9,756.0 L1434.3,753.5 L1434.6,751.0 L1435.0,748.5 L1435.4,746.0 L1435.7,743.6 L1436.1,741.1 L1436.4,738.6 L1436.7,736.1 L1437.1,733.6 L1437.4,731.1 L1437.7,728.6 L1438.0,726.2 L1438.4,723.7 L1438.7,721.2 L1439.0,718.7 L1439.3,716.2 L1439.5,713.7 L1439.8,711.2 L1440.1,708.7 L1440.4,706.2 L1440.6,703.7 L1440.9,701.2 L1441.2,698.7 L1441.4,696.3 L1441.7,693.8 L1441.9,691.3 L1442.1,688.8 L1442.4,686.3 L1442.6,683.8 L1442.8,681.3 L1443.0,678.8 L1443.2,676.3 L1443.4,673.8 L1443.6,671.3 L1443.7,668.8 L1443.9,666.3 L1444.1,663.8 L1444.2,661.2 L1444.4,658.7 L1444.5,656.2 L1444.6,653.7 L1444.8,651.2 L1444.9,648.7 L1445.0,646.2 L1445.1,643.7 L1445.2,641.2 L1445.3,638.7 L1445.4,636.2 L1445.4,633.7 L1445.5,631.2 L1445.5,628.7 L1445.6,626.2 L1445.6,623.7 L1445.6,621.2 L1445.6,618.7 L1445.6,616.2 L1445.6,613.6 L1445.6,611.1 L1445.6,608.6 L1445.6,606.1 L1445.5,603.6 L1445.5,601.1 L1445.4,598.6 L1445.3,596.1 L1445.2,593.6 L1445.1,591.1 L1445.0,588.6 L1444.9,586.1 L1444.8,583.6 L1444.6,581.1 L1444.5,578.6 L1444.3,576.1 L1444.2,573.6 L1444.0,571.1 L1443.8,568.6 L1443.6,566.1 L1443.4,563.6 L1443.1,561.1 L1442.9,558.6 L1442.6,556.1 L1442.4,553.6 L1442.1,551.1 L1441.8,548.6 L1441.5,546.1 L1441.2,543.6 L1440.9,541.1 L1440.5,538.7 L1440.2,536.2 L1439.8,533.7 L1439.4,531.2 L1439.1,528.7 L1438.7,526.2 L1438.2,523.8 L1437.8,521.3 L1437.4,518.8 L1436.9,516.3 L1436.5,513.9 L1436.0,511.4 L1435.5,508.9 L1435.0,506.5 L1434.5,504.0 L1434.0,501.6 L1433.5,499.1 L1433.0,496.7 L1432.4,494.2 L1431.8,491.8 L1431.3,489.3 L1430.7,486.9 L1430.1,484.4 L1429.5,482.0 L1428.8,479.6 L1428.2,477.2 L1427.5,474.8 L1426.9,472.4 L1426.2,470.0 L1425.4,467.6 L1424.7,465.2 L1423.9,462.8 L1423.1,460.5 L1422.3,458.1 L1421.4,455.8 L1420.5,453.4 L1419.5,451.1 L1418.6,448.8 L1417.5,446.6 L1416.5,444.3 L1415.4,442.0 L1414.3,439.8 L1413.1,437.6 L1412.0,435.3 L1410.7,433.1 L1409.5,431.0 L1408.3,428.8 L1407.0,426.6 L1405.7,424.4 L1404.4,422.3 L1403.1,420.2 L1401.7,418.0 L1400.4,415.9 L1399.0,413.8 L1397.6,411.7 L1396.2,409.6 L1394.8,407.5 L1393.4,405.5 L1391.9,403.4 L1390.5,401.4 L1389.0,399.3 L1387.6,397.3 L1386.1,395.3 L1384.6,393.3 L1383.0,391.3 L1381.5,389.3 L1380.0,387.3 L1378.4,385.3 L1376.8,383.4 L1375.3,381.4 L1373.7,379.5 L1372.1,377.6 L1370.4,375.7 L1368.8,373.8 L1367.2,371.9 L1365.5,370.0 L1363.8,368.1 L1362.2,366.3 L1360.5,364.4 L1358.8,362.6 L1357.0,360.8 L1355.3,359.0 L1353.6,357.2 L1351.8,355.4 L1350.0,353.6 L1348.2,351.9 L1346.5,350.1 L1344.6,348.4 L1342.8,346.7 L1341.0,345.0 L1339.2,343.3 L1337.3,341.6 L1335.4,339.9 L1333.6,338.2 L1331.7,336.6 L1329.8,334.9 L1327.9,333.3 L1325.9,331.7 L1324.0,330.1 L1322.1,328.5 L1320.1,326.9 L1318.1,325.4 L1316.2,323.8 L1314.2,322.3 L1312.2,320.8 L1310.2,319.3 L1308.1,317.8 L1306.1,316.3 L1304.1,314.8 L1302.0,313.4 L1300.0,311.9 L1297.9,310.5 L1295.8,309.1 L1293.7,307.7 L1291.6,306.3 L1289.5,305.0 L1287.3,303.7 L1285.2,302.4 L1283.0,301.1 L1280.9,299.8 L1278.7,298.6 L1276.5,297.3 L1274.3,296.2 L1272.1,295.0 L1269.8,293.8 L1267.6,292.7 L1265.4,291.6 L1263.1,290.6 L1260.8,289.5 L1258.5,288.5 L1256.2,287.6 L1253.9,286.6 L1251.6,285.7 L1249.3,284.8 L1246.9,284.0 L1244.6,283.2 L1242.2,282.4 L1239.8,281.7 L1237.4,281.0 L1235.0,280.3 L1232.6,279.6 L1230.2,279.0 L1227.7,278.4 L1225.3,277.8 L1222.8,277.2 L1220.4,276.7 L1217.9,276.2 L1215.5,275.6 L1213.0,275.1 L1210.6,274.6 L1208.1,274.1 L1205.6,273.6 L1203.2,273.1 L1200.7,272.6 L1198.2,272.1 L1195.8,271.6 L1193.3,271.2 L1190.8,270.7 L1188.4,270.3 L1185.9,269.8 L1183.4,269.4 L1180.9,269.0 L1178.5,268.6 L1176.0,268.2 L1173.5,267.9 L1171.0,267.5 L1168.5,267.2 L1166.1,266.8 L1163.6,266.5 L1161.1,266.2 L1158.6,265.9 L1156.1,265.6 L1153.6,265.3 L1151.1,265.1 L1148.6,264.8 L1146.2,264.6 L1143.7,264.4 L1141.2,264.1 L1138.7,263.9 L1136.2,263.7 L1133.7,263.5 L1131.2,263.3 L1128.7,263.2 L1126.2,263.0 L1123.7,262.8 L1121.2,262.7 L1118.7,262.5 L1116.2,262.4 L1113.7,262.2 L1111.2,262.1 L1108.7,262.0 L1106.2,261.8 L1103.7,261.7 L1101.2,261.6 L1098.7,261.5 L1096.2,261.4 L1093.7,261.3 L1091.2,261.2 L1088.6,261.1 L1086.1,261.0 L1083.6,260.9 L1081.1,260.8 L1078.6,260.7 L1076.1,260.6 L1073.6,260.5 L1071.1,260.4 L1068.6,260.3 L1066.1,260.2 L1063.6,260.1 L1061.1,260.1 L1058.6,260.0 L1056.1,259.9 L1053.5,259.8 L1051.0,259.7 L1048.5,259.6 L1046.0,259.5 L1043.5,259.3 L1041.0,259.2 L1038.5,259.1 L1036.0,259.0 Z" fill="#8a7b76"/>
<path d="M1011.5,287.5 L1009.9,289.7 L1008.4,291.8 L1006.8,294.0 L1005.2,296.1 L1003.6,298.3 L1002.1,300.4 L1000.5,302.6 L998.9,304.7 L997.3,306.9 L995.8,309.1 L994.2,311.2 L992.6,313.4 L991.1,315.5 L989.5,317.7 L987.9,319.9 L986.4,322.0 L984.8,324.2 L983.2,326.3 L981.7,328.5 L980.1,330.7 L978.6,332.8 L977.0,335.0 L977.0,335.0 L974.7,335.8 L972.3,336.6 L970.1,337.5 L967.8,338.5 L965.6,339.5 L963.3,340.6 L961.2,341.7 L959.0,342.9 L956.8,344.2 L954.7,345.4 L952.6,346.7 L950.5,348.1 L948.4,349.4 L946.3,350.8 L944.2,352.2 L942.2,353.6 L940.1,355.1 L938.0,356.5 L936.0,358.0 L933.9,359.4 L931.9,360.9 L929.8,362.3 L927.7,363.8 L925.7,365.2 L923.6,366.7 L921.6,368.1 L919.5,369.6 L917.4,371.0 L915.3,372.4 L913.2,373.8 L911.1,375.2 L909.0,376.6 L906.9,378.0 L904.8,379.3 L902.7,380.6 L900.5,381.9 L898.4,383.2 L896.2,384.5 L894.0,385.7 L891.8,387.0 L889.7,388.2 L887.5,389.4 L885.3,390.6 L883.1,391.8 L880.8,393.0 L878.6,394.1 L876.4,395.3 L874.2,396.4 L871.9,397.6 L869.7,398.7 L867.4,399.8 L865.2,400.9 L862.9,402.0 L860.6,403.0 L858.4,404.1 L856.1,405.2 L853.8,406.2 L851.5,407.3 L849.3,408.3 L847.0,409.4 L844.7,410.4 L842.4,411.4 L840.1,412.5 L837.8,413.5 L835.5,414.5 L833.2,415.5 L830.9,416.5 L828.6,417.5 L826.3,418.5 L824.0,419.6 L821.7,420.6 L819.4,421.6 L817.1,422.6 L814.8,423.6 L812.5,424.6 L810.2,425.6 L807.9,426.6 L805.6,427.6 L803.3,428.6 L801.0,429.6 L798.6,430.5 L796.3,431.5 L794.0,432.5 L791.7,433.5 L789.4,434.5 L787.0,435.5 L784.7,436.6 L782.4,437.6 L780.1,438.6 L777.9,439.7 L775.6,440.8 L773.3,441.9 L771.1,443.0 L768.8,444.1 L766.6,445.3 L764.4,446.5 L762.2,447.7 L760.1,448.9 L757.9,450.2 L755.8,451.5 L753.7,452.9 L751.7,454.2 L749.6,455.6 L747.6,457.1 L745.6,458.5 L743.6,460.0 L741.6,461.6 L739.6,463.1 L737.7,464.7 L735.8,466.3 L733.9,467.9 L732.0,469.5 L730.2,471.2 L728.3,472.9 L726.5,474.6 L724.7,476.4 L722.9,478.1 L721.1,479.9 L719.4,481.7 L717.6,483.5 L715.9,485.3 L714.1,487.1 L712.4,488.9 L710.6,490.7 L708.9,492.6 L707.1,494.4 L705.4,496.2 L703.6,498.0 L701.9,499.8 L700.1,501.6 L698.3,503.4 L696.6,505.2 L694.8,507.0 L693.0,508.7 L691.2,510.5 L689.5,512.3 L687.7,514.1 L685.9,515.8 L684.2,517.6 L682.4,519.4 L680.6,521.2 L678.9,523.0 L677.1,524.8 L675.4,526.6 L673.7,528.4 L672.0,530.3 L670.3,532.1 L668.6,534.0 L666.9,535.8 L665.3,537.7 L663.6,539.6 L662.0,541.5 L660.4,543.4 L658.8,545.3 L657.2,547.3 L655.6,549.2 L654.0,551.2 L652.4,553.1 L650.9,555.1 L649.3,557.1 L647.8,559.1 L646.3,561.0 L644.8,563.0 L643.3,565.1 L641.8,567.1 L640.3,569.1 L638.8,571.1 L637.3,573.1 L635.8,575.2 L634.4,577.2 L633.0,579.3 L631.5,581.4 L630.1,583.4 L628.7,585.5 L627.4,587.6 L626.0,589.7 L624.7,591.9 L623.3,594.0 L622.0,596.1 L620.7,598.3 L619.5,600.4 L618.2,602.6 L617.0,604.8 L615.8,607.0 L614.6,609.2 L613.5,611.4 L612.3,613.6 L611.2,615.9 L610.1,618.2 L609.1,620.4 L608.0,622.7 L607.0,625.0 L606.1,627.4 L605.1,629.7 L604.2,632.0 L603.3,634.4 L602.5,636.8 L601.7,639.2 L600.9,641.6 L600.1,644.0 L599.4,646.5 L598.8,648.9 L598.1,651.4 L597.5,653.9 L597.0,656.3 L596.5,658.8 L596.0,661.3 L595.6,663.8 L595.2,666.3 L594.9,668.8 L594.6,671.3 L594.3,673.8 L594.1,676.3 L594.0,678.8 L593.9,681.3 L593.9,683.8 L593.9,686.3 L594.0,688.7 L594.1,691.2 L594.3,693.7 L594.6,696.1 L594.9,698.6 L595.3,701.0 L595.7,703.4 L596.2,705.9 L596.8,708.3 L597.4,710.6 L598.1,713.0 L598.9,715.3 L599.7,717.7 L600.6,720.0 L601.6,722.3 L602.6,724.5 L603.7,726.8 L604.9,729.0 L606.1,731.2 L607.3,733.4 L608.6,735.6 L610.0,737.7 L611.4,739.9 L612.8,742.0 L614.3,744.0 L615.8,746.1 L617.3,748.1 L618.9,750.1 L620.6,752.1 L622.2,754.1 L623.9,756.0 L625.6,757.9 L627.3,759.8 L629.1,761.7 L630.8,763.5 L632.6,765.3 L634.4,767.1 L636.2,768.8 L638.0,770.5 L639.9,772.2 L641.7,773.9 L643.5,775.5 L645.4,777.1 L647.2,778.7 L647.2,778.7 L649.7,779.3 L652.1,779.9 L654.6,780.4 L657.1,781.0 L659.5,781.6 L662.0,782.1 L664.5,782.7 L666.9,783.2 L669.4,783.8 L671.9,784.3 L674.4,784.9 L676.9,785.4 L679.4,785.9 L681.9,786.4 L684.4,786.8 L687.0,787.3 L689.5,787.8 L692.0,788.2 L694.6,788.6 L697.2,789.0 L699.7,789.4 L702.3,789.7 L704.9,790.0 L707.5,790.3 L710.0,790.5 L712.6,790.7 L715.2,790.9 L717.8,791.0 L720.3,791.1 L722.9,791.1 L725.4,791.0 L728.0,790.9 L730.5,790.7 L733.0,790.4 L735.5,790.1 L738.0,789.7 L740.4,789.2 L742.8,788.6 L745.2,788.0 L747.6,787.3 L750.0,786.5 L752.3,785.6 L754.6,784.7 L756.9,783.7 L759.2,782.7 L761.5,781.6 L763.7,780.4 L765.9,779.2 L768.2,777.9 L770.3,776.6 L772.5,775.3 L774.7,773.9 L776.8,772.4 L778.9,771.0 L781.0,769.5 L783.1,767.9 L785.1,766.4 L787.2,764.8 L789.2,763.1 L791.2,761.5 L793.2,759.9 L795.2,758.2 L797.2,756.5 L799.1,754.8 L801.1,753.1 L803.0,751.4 L804.9,749.7 L806.8,748.0 L808.7,746.3 L810.6,744.6 L812.4,742.9 L814.3,741.3 L816.1,739.6 L816.1,739.6 L817.9,737.8 L819.8,736.0 L821.6,734.2 L823.5,732.5 L825.4,730.7 L827.3,729.0 L829.2,727.3 L831.1,725.6 L833.0,723.9 L835.0,722.3 L836.9,720.6 L838.9,719.0 L840.9,717.4 L842.9,715.8 L844.9,714.2 L846.9,712.6 L848.9,711.0 L851.0,709.5 L853.0,708.0 L855.1,706.4 L857.1,704.9 L859.2,703.4 L861.3,702.0 L863.4,700.5 L865.5,699.0 L867.6,697.6 L869.7,696.2 L871.9,694.7 L874.0,693.3 L876.1,691.9 L878.3,690.5 L880.5,689.2 L882.6,687.8 L884.8,686.5 L887.0,685.1 L889.2,683.8 L891.4,682.5 L893.6,681.2 L895.8,679.9 L898.0,678.6 L900.3,677.3 L902.5,676.1 L904.7,674.8 L907.0,673.6 L909.2,672.3 L911.5,671.1 L913.7,669.9 L916.0,668.7 L918.3,667.5 L920.5,666.3 L922.8,665.1 L925.1,663.9 L927.4,662.8 L929.7,661.6 L931.9,660.5 L934.2,659.3 L936.5,658.2 L938.8,657.1 L941.1,656.0 L943.4,654.8 L945.8,653.7 L948.1,652.6 L950.4,651.6 L952.7,650.5 L955.0,649.4 L955.0,649.4 L954.1,652.0 L953.4,654.5 L953.0,657.0 L952.9,659.4 L952.9,661.7 L953.2,664.0 L953.7,666.3 L954.3,668.5 L955.1,670.7 L956.1,672.8 L957.2,674.9 L958.4,677.0 L959.8,679.0 L961.2,681.1 L962.7,683.1 L964.3,685.1 L965.9,687.0 L967.6,689.0 L969.3,691.0 L971.0,692.9 L972.6,694.9 L974.3,696.8 L976.0,698.8 L977.6,700.7 L979.3,702.7 L980.9,704.7 L982.5,706.6 L984.1,708.6 L985.7,710.6 L987.2,712.6 L988.8,714.6 L990.3,716.6 L991.8,718.6 L993.3,720.6 L994.7,722.7 L996.1,724.7 L997.6,726.8 L999.0,728.9 L1000.3,731.0 L1001.7,733.1 L1003.0,735.2 L1004.3,737.3 L1005.6,739.5 L1006.8,741.6 L1008.0,743.8 L1009.2,746.0 L1010.4,748.2 L1011.5,750.5 L1012.6,752.7 L1013.7,755.0 L1014.8,757.2 L1015.8,759.5 L1016.8,761.8 L1017.8,764.1 L1018.8,766.5 L1019.7,768.8 L1020.6,771.1 L1021.5,773.5 L1022.3,775.9 L1023.1,778.2 L1023.9,780.6 L1024.7,783.0 L1025.4,785.4 L1026.1,787.8 L1026.8,790.3 L1027.5,792.7 L1028.1,795.1 L1028.7,797.6 L1029.2,800.0 L1029.8,802.5 L1030.3,805.0 L1030.8,807.4 L1031.2,809.9 L1031.6,812.4 L1032.0,814.9 L1032.4,817.4 L1032.7,819.9 L1033.0,822.4 L1033.3,824.9 L1033.5,827.4 L1033.8,829.9 L1033.9,832.4 L1034.1,835.0 L1034.2,837.5 L1034.3,840.0 L1034.4,842.5 L1034.4,845.0 L1034.4,847.6 L1034.4,850.1 L1034.3,852.6 L1034.2,855.1 L1034.0,857.6 L1033.9,860.1 L1033.7,862.7 L1033.4,865.2 L1033.1,867.7 L1032.8,870.1 L1032.5,872.6 L1032.1,875.1 L1031.7,877.6 L1031.2,880.0 L1030.7,882.5 L1030.2,884.9 L1029.6,887.4 L1029.0,889.8 L1028.4,892.2 L1027.7,894.6 L1027.0,897.0 L1026.3,899.4 L1025.5,901.8 L1024.8,904.2 L1024.0,906.6 L1023.1,908.9 L1022.3,911.3 L1021.4,913.7 L1020.5,916.0 L1019.7,918.4 L1018.7,920.7 L1017.8,923.0 L1016.9,925.4 L1016.0,927.7 L1015.0,930.1 L1014.1,932.4 L1013.1,934.7 L1012.1,937.1 L1011.2,939.4 L1010.2,941.7 L1009.2,944.0 L1008.2,946.4 L1007.3,948.7 L1006.3,951.0 L1005.3,953.3 L1004.3,955.6 L1003.3,957.9 L1002.3,960.2 L1001.2,962.5 L1000.2,964.8 L999.2,967.1 L998.2,969.4 L997.1,971.7 L996.1,974.0 L995.0,976.3 L994.0,978.6 L992.9,980.9 L991.9,983.2 L990.8,985.5 L989.7,987.7 L988.7,990.0 L987.6,992.3 L986.5,994.6 L985.4,996.8 L984.3,999.1 L983.2,1001.3 L982.1,1003.6 L981.0,1005.9 L979.9,1008.1 L978.8,1010.4 L977.6,1012.6 L976.5,1014.9 L975.4,1017.1 L974.2,1019.3 L973.1,1021.6 L971.9,1023.8 L970.8,1026.0 L969.6,1028.2 L968.4,1030.5 L967.3,1032.7 L966.1,1034.9 L964.9,1037.1 L963.7,1039.3 L962.5,1041.5 L961.4,1043.7 L960.2,1046.0 L959.0,1048.2 L957.8,1050.4 L956.6,1052.6 L955.4,1054.8 L954.2,1057.0 L953.0,1059.2 L951.8,1061.4 L950.6,1063.6 L949.5,1065.8 L948.3,1068.0 L947.1,1070.3 L945.9,1072.5 L944.7,1074.7 L943.6,1076.9 L942.4,1079.1 L941.2,1081.4 L940.1,1083.6 L938.9,1085.8 L937.7,1088.1 L936.6,1090.3 L935.5,1092.5 L934.3,1094.8 L933.2,1097.0 L932.1,1099.3 L931.0,1101.6 L929.9,1103.8 L928.8,1106.1 L927.7,1108.4 L926.6,1110.7 L925.5,1113.0 L924.5,1115.3 L923.4,1117.6 L922.4,1119.9 L921.4,1122.2 L920.3,1124.5 L919.3,1126.9 L918.4,1129.2 L917.4,1131.5 L916.5,1133.9 L915.5,1136.2 L914.6,1138.6 L913.8,1141.0 L912.9,1143.4 L912.1,1145.7 L911.3,1148.1 L910.5,1150.5 L909.8,1152.9 L909.1,1155.3 L908.4,1157.7 L907.7,1160.1 L907.1,1162.5 L906.6,1165.0 L906.0,1167.4 L905.6,1169.8 L905.1,1172.2 L904.7,1174.7 L904.3,1177.1 L904.0,1179.6 L903.7,1182.0 L903.5,1184.5 L903.4,1186.9 L903.2,1189.4 L903.2,1191.9 L903.1,1194.3 L903.2,1196.8 L903.3,1199.3 L903.4,1201.8 L903.6,1204.2 L903.9,1206.7 L904.2,1209.2 L904.6,1211.7 L905.1,1214.2 L905.6,1216.7 L906.2,1219.2 L906.8,1221.7 L907.5,1224.2 L908.2,1226.6 L908.9,1229.1 L909.6,1231.6 L910.4,1234.1 L911.2,1236.5 L912.0,1239.0 L912.8,1241.4 L913.6,1243.8 L914.4,1246.2 L915.3,1248.6 L916.1,1251.0 L917.0,1253.4 L917.9,1255.7 L918.8,1258.1 L919.7,1260.4 L920.7,1262.7 L921.8,1265.0 L922.8,1267.2 L923.9,1269.5 L925.0,1271.7 L926.2,1273.9 L927.4,1276.1 L928.7,1278.2 L930.0,1280.3 L931.3,1282.5 L932.6,1284.5 L934.0,1286.6 L935.5,1288.6 L936.9,1290.6 L938.4,1292.6 L940.0,1294.6 L941.5,1296.5 L943.1,1298.4 L944.8,1300.3 L946.5,1302.1 L948.2,1304.0 L949.9,1305.8 L951.7,1307.5 L953.5,1309.2 L955.4,1310.9 L957.2,1312.6 L959.2,1314.3 L961.1,1315.9 L963.1,1317.4 L965.1,1319.0 L967.1,1320.5 L969.1,1321.9 L971.2,1323.4 L973.3,1324.8 L975.5,1326.2 L977.6,1327.5 L979.8,1328.8 L982.0,1330.0 L984.2,1331.3 L986.4,1332.5 L988.7,1333.6 L991.0,1334.7 L993.3,1335.8 L995.6,1336.8 L997.9,1337.8 L1000.2,1338.7 L1002.6,1339.7 L1005.0,1340.5 L1007.3,1341.3 L1009.7,1342.1 L1012.1,1342.9 L1014.6,1343.6 L1017.0,1344.2 L1019.4,1344.8 L1021.8,1345.4 L1024.3,1345.9 L1026.7,1346.4 L1029.2,1346.8 L1031.7,1347.2 L1034.1,1347.5 L1036.6,1347.8 L1036.6,1347.8 L1039.1,1348.0 L1041.7,1348.1 L1044.2,1348.2 L1046.7,1348.4 L1049.2,1348.5 L1051.8,1348.5 L1054.3,1348.6 L1056.8,1348.6 L1059.3,1348.7 L1061.9,1348.7 L1064.4,1348.7 L1066.9,1348.7 L1069.5,1348.6 L1072.0,1348.6 L1074.5,1348.5 L1077.0,1348.4 L1079.6,1348.3 L1082.1,1348.2 L1084.6,1348.1 L1087.1,1348.0 L1089.7,1347.8 L1092.2,1347.7 L1094.7,1347.5 L1097.2,1347.3 L1099.7,1347.1 L1102.3,1346.9 L1104.8,1346.7 L1107.3,1346.5 L1109.8,1346.2 L1112.4,1346.0 L1114.9,1345.7 L1117.4,1345.4 L1119.9,1345.2 L1122.4,1344.9 L1124.9,1344.6 L1127.5,1344.3 L1130.0,1344.0 L1132.5,1343.6 L1135.0,1343.3 L1137.5,1342.9 L1140.0,1342.6 L1142.5,1342.2 L1145.0,1341.9 L1147.5,1341.5 L1150.0,1341.1 L1152.5,1340.7 L1155.0,1340.3 L1157.6,1339.9 L1160.0,1339.4 L1162.5,1339.0 L1165.0,1338.5 L1167.5,1338.1 L1170.0,1337.6 L1172.5,1337.1 L1175.0,1336.7 L1177.5,1336.2 L1180.0,1335.7 L1182.5,1335.2 L1184.9,1334.6 L1187.4,1334.1 L1189.9,1333.6 L1192.4,1333.0 L1194.8,1332.5 L1197.3,1331.9 L1199.8,1331.3 L1202.2,1330.7 L1204.7,1330.2 L1207.2,1329.5 L1209.6,1328.9 L1212.1,1328.3 L1214.5,1327.7 L1217.0,1327.1 L1219.4,1326.4 L1221.9,1325.8 L1224.3,1325.1 L1226.7,1324.4 L1229.2,1323.7 L1231.6,1323.0 L1234.0,1322.3 L1236.5,1321.6 L1238.9,1320.9 L1241.3,1320.2 L1243.7,1319.5 L1246.1,1318.7 L1248.6,1318.0 L1251.0,1317.2 L1253.4,1316.4 L1255.8,1315.7 L1258.2,1314.9 L1260.6,1314.1 L1263.0,1313.3 L1265.4,1312.5 L1267.8,1311.7 L1270.2,1310.8 L1272.5,1310.0 L1274.9,1309.2 L1277.3,1308.3 L1279.7,1307.4 L1282.1,1306.6 L1284.4,1305.7 L1286.8,1304.8 L1289.2,1303.9 L1291.5,1303.0 L1293.9,1302.1 L1296.3,1301.2 L1298.6,1300.3 L1301.0,1299.3 L1303.3,1298.4 L1305.7,1297.5 L1308.0,1296.5 L1310.4,1295.6 L1312.7,1294.6 L1315.1,1293.6 L1317.4,1292.7 L1319.7,1291.7 L1322.1,1290.7 L1324.4,1289.7 L1326.7,1288.8 L1329.1,1287.8 L1331.4,1286.8 L1333.7,1285.8 L1336.1,1284.8 L1338.4,1283.8 L1340.7,1282.8 L1343.1,1281.8 L1345.4,1280.8 L1347.7,1279.8 L1350.0,1278.8 L1352.4,1277.8 L1354.7,1276.8 L1357.0,1275.8 L1359.3,1274.8 L1361.7,1273.8 L1364.0,1272.8 L1364.0,1272.8 L1361.6,1272.3 L1359.2,1271.8 L1356.7,1271.3 L1354.2,1270.8 L1351.8,1270.4 L1349.3,1269.9 L1346.8,1269.4 L1344.4,1268.9 L1341.9,1268.3 L1339.4,1267.8 L1337.0,1267.2 L1334.5,1266.6 L1332.1,1265.9 L1329.7,1265.2 L1327.3,1264.4 L1324.9,1263.5 L1322.6,1262.6 L1320.3,1261.7 L1318.0,1260.7 L1315.7,1259.6 L1313.5,1258.5 L1311.3,1257.3 L1309.1,1256.0 L1307.0,1254.7 L1304.9,1253.4 L1302.9,1252.0 L1300.9,1250.5 L1298.9,1249.0 L1297.0,1247.5 L1295.1,1245.9 L1293.3,1244.2 L1291.5,1242.5 L1289.7,1240.8 L1288.0,1239.0 L1286.4,1237.2 L1284.8,1235.3 L1283.2,1233.4 L1281.6,1231.4 L1280.1,1229.5 L1278.7,1227.4 L1277.3,1225.4 L1275.9,1223.3 L1274.5,1221.2 L1273.2,1219.1 L1271.9,1216.9 L1270.7,1214.7 L1269.4,1212.5 L1268.2,1210.2 L1267.1,1208.0 L1265.9,1205.7 L1264.8,1203.4 L1263.8,1201.1 L1262.7,1198.8 L1261.7,1196.4 L1260.7,1194.1 L1259.7,1191.7 L1258.8,1189.4 L1257.9,1187.0 L1257.0,1184.6 L1256.1,1182.2 L1255.2,1179.8 L1254.4,1177.4 L1253.6,1175.0 L1252.8,1172.6 L1252.0,1170.2 L1251.3,1167.8 L1250.6,1165.4 L1249.9,1163.0 L1249.3,1160.6 L1248.6,1158.1 L1248.1,1155.7 L1247.5,1153.2 L1246.9,1150.8 L1246.4,1148.4 L1246.0,1145.9 L1245.5,1143.4 L1245.1,1141.0 L1244.7,1138.5 L1244.4,1136.1 L1244.0,1133.6 L1243.7,1131.1 L1243.5,1128.7 L1243.3,1126.2 L1243.1,1123.7 L1242.9,1121.2 L1242.8,1118.7 L1242.7,1116.2 L1242.7,1113.7 L1242.7,1111.3 L1242.7,1108.8 L1242.8,1106.3 L1242.8,1103.8 L1243.0,1101.3 L1243.1,1098.8 L1243.3,1096.3 L1243.5,1093.8 L1243.7,1091.3 L1244.0,1088.8 L1244.3,1086.3 L1244.6,1083.8 L1244.9,1081.3 L1245.3,1078.8 L1245.6,1076.3 L1246.0,1073.8 L1246.4,1071.3 L1246.9,1068.8 L1247.3,1066.4 L1247.8,1063.9 L1248.3,1061.4 L1248.8,1058.9 L1249.4,1056.5 L1249.9,1054.0 L1250.4,1051.5 L1251.0,1049.1 L1251.6,1046.6 L1252.2,1044.2 L1252.8,1041.7 L1253.4,1039.3 L1254.0,1036.9 L1254.7,1034.4 L1255.3,1032.0 L1255.9,1029.6 L1256.6,1027.2 L1257.3,1024.7 L1257.9,1022.3 L1258.6,1019.9 L1259.3,1017.5 L1260.0,1015.1 L1260.7,1012.7 L1261.3,1010.3 L1262.0,1007.9 L1262.7,1005.5 L1263.4,1003.1 L1264.1,1000.7 L1264.8,998.2 L1265.5,995.8 L1266.2,993.4 L1266.9,991.0 L1267.6,988.6 L1268.2,986.2 L1268.9,983.8 L1269.6,981.4 L1270.3,979.0 L1270.9,976.6 L1271.6,974.1 L1272.2,971.7 L1272.9,969.3 L1273.5,966.9 L1274.2,964.5 L1274.8,962.0 L1275.5,959.6 L1276.1,957.2 L1276.7,954.7 L1277.4,952.3 L1278.0,949.9 L1278.6,947.5 L1279.2,945.0 L1279.9,942.6 L1280.5,940.2 L1281.1,937.7 L1281.7,935.3 L1282.3,932.9 L1282.9,930.4 L1283.6,928.0 L1284.2,925.5 L1284.8,923.1 L1285.4,920.7 L1286.0,918.2 L1286.6,915.8 L1287.3,913.4 L1287.9,910.9 L1288.5,908.5 L1289.1,906.1 L1289.7,903.6 L1290.4,901.2 L1291.0,898.8 L1291.6,896.3 L1292.2,893.9 L1292.9,891.5 L1293.5,889.0 L1294.1,886.6 L1294.7,884.2 L1295.4,881.7 L1296.0,879.3 L1296.6,876.9 L1297.2,874.4 L1297.9,872.0 L1298.5,869.5 L1299.1,867.1 L1299.7,864.7 L1300.3,862.2 L1300.9,859.8 L1301.6,857.4 L1302.2,854.9 L1302.8,852.5 L1303.4,850.1 L1304.0,847.6 L1304.6,845.2 L1305.2,842.7 L1305.8,840.3 L1306.3,837.9 L1306.9,835.4 L1307.5,833.0 L1308.1,830.5 L1308.7,828.1 L1309.2,825.6 L1309.8,823.2 L1310.3,820.7 L1310.9,818.3 L1311.5,815.8 L1312.0,813.4 L1312.5,810.9 L1313.1,808.5 L1313.6,806.0 L1314.1,803.6 L1314.6,801.1 L1315.1,798.7 L1315.6,796.2 L1316.1,793.8 L1316.6,791.3 L1317.1,788.8 L1317.6,786.4 L1318.0,783.9 L1318.5,781.4 L1319.0,779.0 L1319.4,776.5 L1319.8,774.0 L1320.3,771.6 L1320.7,769.1 L1321.1,766.6 L1321.5,764.1 L1321.9,761.7 L1322.3,759.2 L1322.7,756.7 L1323.1,754.2 L1323.4,751.8 L1323.8,749.3 L1324.1,746.8 L1324.5,744.3 L1324.8,741.8 L1325.1,739.3 L1325.5,736.8 L1325.8,734.3 L1326.1,731.9 L1326.4,729.4 L1326.6,726.9 L1326.9,724.4 L1327.2,721.9 L1327.5,719.4 L1327.7,716.9 L1327.9,714.4 L1328.2,711.9 L1328.4,709.4 L1328.6,706.9 L1328.8,704.4 L1329.1,701.9 L1329.2,699.4 L1329.4,696.9 L1329.6,694.4 L1329.8,691.9 L1329.9,689.4 L1330.1,686.9 L1330.2,684.3 L1330.4,681.8 L1330.5,679.3 L1330.6,676.8 L1330.8,674.3 L1330.9,671.8 L1331.0,669.3 L1331.0,666.8 L1331.1,664.3 L1331.2,661.8 L1331.2,659.2 L1331.3,656.7 L1331.3,654.2 L1331.4,651.7 L1331.4,649.2 L1331.4,646.7 L1331.4,644.1 L1331.4,641.6 L1331.4,639.1 L1331.4,636.6 L1331.4,634.1 L1331.4,631.6 L1331.3,629.1 L1331.3,626.5 L1331.2,624.0 L1331.2,621.5 L1331.1,619.0 L1331.0,616.5 L1330.9,614.0 L1330.8,611.4 L1330.7,608.9 L1330.5,606.4 L1330.4,603.9 L1330.2,601.4 L1330.1,598.9 L1329.9,596.4 L1329.7,593.9 L1329.5,591.4 L1329.3,588.9 L1329.1,586.4 L1328.9,583.9 L1328.6,581.4 L1328.3,578.9 L1328.1,576.4 L1327.8,573.9 L1327.5,571.4 L1327.2,568.9 L1326.8,566.4 L1326.5,563.9 L1326.1,561.4 L1325.8,559.0 L1325.4,556.5 L1325.0,554.0 L1324.6,551.6 L1324.1,549.1 L1323.7,546.6 L1323.2,544.2 L1322.7,541.7 L1322.2,539.3 L1321.7,536.8 L1321.2,534.4 L1320.7,531.9 L1320.1,529.5 L1319.5,527.1 L1318.9,524.6 L1318.3,522.2 L1317.7,519.8 L1317.0,517.4 L1316.3,515.0 L1315.7,512.6 L1314.9,510.2 L1314.2,507.8 L1313.5,505.4 L1312.7,503.0 L1311.9,500.6 L1311.1,498.3 L1310.3,495.9 L1309.5,493.5 L1308.6,491.2 L1307.7,488.8 L1306.8,486.5 L1305.9,484.1 L1304.9,481.8 L1304.0,479.5 L1303.0,477.2 L1302.0,474.8 L1301.0,472.5 L1300.0,470.2 L1298.9,467.9 L1297.9,465.7 L1296.8,463.4 L1295.7,461.1 L1294.6,458.8 L1293.5,456.6 L1292.3,454.3 L1291.2,452.1 L1290.0,449.8 L1288.8,447.6 L1287.6,445.4 L1286.4,443.2 L1285.2,441.0 L1283.9,438.8 L1282.7,436.6 L1281.4,434.4 L1280.2,432.2 L1278.9,430.1 L1277.6,427.9 L1276.3,425.8 L1274.9,423.6 L1273.6,421.5 L1272.2,419.4 L1270.9,417.3 L1269.5,415.2 L1268.1,413.1 L1266.7,411.0 L1265.3,408.9 L1263.9,406.9 L1262.4,404.8 L1260.9,402.8 L1259.5,400.8 L1258.0,398.8 L1256.5,396.8 L1254.9,394.8 L1253.4,392.8 L1251.8,390.9 L1250.3,388.9 L1248.7,387.0 L1247.1,385.1 L1245.5,383.2 L1243.8,381.3 L1242.2,379.4 L1240.5,377.6 L1238.8,375.8 L1237.1,373.9 L1235.4,372.1 L1233.6,370.3 L1231.8,368.6 L1230.1,366.8 L1228.3,365.1 L1226.5,363.4 L1224.6,361.6 L1222.8,360.0 L1220.9,358.3 L1219.0,356.6 L1217.2,355.0 L1215.2,353.3 L1213.3,351.7 L1211.4,350.1 L1209.5,348.5 L1207.5,346.9 L1205.5,345.4 L1203.5,343.8 L1201.5,342.3 L1199.5,340.7 L1197.5,339.2 L1195.5,337.7 L1193.5,336.3 L1191.4,334.8 L1189.4,333.3 L1187.3,331.9 L1185.2,330.4 L1183.1,329.0 L1181.0,327.6 L1178.9,326.2 L1176.8,324.8 L1174.7,323.5 L1172.6,322.1 L1170.4,320.7 L1168.3,319.4 L1166.2,318.1 L1164.0,316.7 L1161.9,315.4 L1159.7,314.1 L1157.5,312.9 L1155.4,311.6 L1153.2,310.3 L1151.0,309.1 L1148.8,307.8 L1146.6,306.6 L1144.5,305.3 L1142.3,304.1 L1140.1,302.9 L1137.9,301.7 L1135.7,300.5 L1133.5,299.3 L1131.3,298.2 L1129.1,297.0 L1126.9,295.8 L1124.7,294.7 L1100.0,300.0 Z" fill="#675c5a"/>
<path d="M1011.5,287.5 C1016.5,281.8 1031.8,263.9 1041.6,253.2 C1051.4,242.5 1063.5,230.0 1070.2,223.1 C1076.9,216.2 1076.9,214.5 1081.7,211.7 C1086.5,208.8 1091.3,206.9 1098.9,206.0 C1106.5,205.1 1115.6,205.1 1127.5,206.0 C1139.4,206.9 1155.9,209.1 1170.5,211.7 C1185.1,214.2 1202.8,218.8 1215.1,221.6 C1227.4,224.4 1237.6,227.8 1244.4,228.6 C1251.2,229.4 1247.4,230.4 1256.2,226.3 C1265.0,222.2 1284.5,211.2 1297.2,204.0 C1309.9,196.8 1320.8,189.1 1332.3,183.0 C1343.8,176.9 1360.6,170.2 1366.3,167.7 L1366.3,167.7 C1365.9,169.1 1369.7,167.1 1364.0,175.9 C1358.3,184.7 1343.4,207.1 1332.3,220.4 C1321.2,233.7 1306.0,247.6 1297.2,255.6 C1288.4,263.6 1285.5,265.6 1279.6,268.5 C1273.7,271.4 1270.8,273.0 1262.0,273.2 C1253.2,273.4 1239.8,270.9 1226.9,269.7 C1214.0,268.5 1196.1,266.8 1184.8,266.1 C1173.5,265.4 1166.2,264.0 1159.0,265.4 C1151.8,266.8 1147.5,270.3 1141.8,274.7 C1136.1,279.1 1129.5,288.2 1124.7,291.8 C1119.9,295.4 1119.9,293.2 1113.2,296.1 C1106.5,299.0 1094.1,305.2 1084.6,309.0 C1075.0,312.8 1064.3,317.1 1055.9,319.0 C1047.5,320.9 1040.4,321.7 1034.4,320.5 C1028.4,319.3 1023.7,315.5 1020.1,311.9 C1016.5,308.3 1014.4,303.1 1013.0,299.0 C1011.6,294.9 1011.8,289.4 1011.5,287.5 Z" fill="#705d56"/>
<path d="M1051.1,459.8 L1051.7,462.3 L1052.4,464.8 L1053.1,467.3 L1053.8,469.8 L1054.6,472.2 L1055.4,474.6 L1056.3,477.0 L1057.2,479.4 L1058.1,481.8 L1059.1,484.1 L1060.2,486.4 L1061.3,488.7 L1062.4,491.0 L1063.6,493.2 L1064.8,495.4 L1066.1,497.6 L1067.5,499.8 L1068.8,501.9 L1070.2,504.0 L1071.7,506.1 L1073.1,508.1 L1074.7,510.2 L1076.2,512.2 L1077.8,514.2 L1079.4,516.1 L1081.1,518.0 L1082.8,519.9 L1084.5,521.8 L1086.3,523.6 L1088.1,525.5 L1089.9,527.2 L1091.7,529.0 L1093.6,530.7 L1095.5,532.4 L1097.4,534.1 L1099.4,535.7 L1101.4,537.3 L1103.4,538.9 L1105.5,540.4 L1107.5,541.9 L1109.6,543.4 L1111.8,544.8 L1113.9,546.2 L1116.1,547.6 L1118.3,548.9 L1120.5,550.2 L1122.7,551.5 L1125.0,552.7 L1127.3,553.9 L1129.6,555.0 L1131.9,556.1 L1134.3,557.2 L1136.6,558.2 L1139.0,559.1 L1141.4,560.0 L1143.8,560.9 L1146.2,561.7 L1148.6,562.4 L1151.1,563.1 L1153.6,563.8 L1156.0,564.3 L1158.5,564.8 L1161.0,565.3 L1163.5,565.7 L1166.0,566.0 L1168.6,566.2 L1171.1,566.4 L1173.6,566.5 L1176.2,566.5 L1178.7,566.4 L1181.3,566.3 L1183.8,566.1 L1186.3,565.8 L1188.9,565.4 L1191.4,564.9 L1193.9,564.4 L1196.4,563.7 L1198.8,563.0 L1201.2,562.2 L1203.6,561.3 L1205.9,560.3 L1208.2,559.2 L1210.4,558.0 L1212.6,556.7 L1214.7,555.4 L1216.7,553.9 L1218.7,552.3 L1220.5,550.7 L1222.3,548.9 L1224.0,547.0 L1225.6,545.0 L1227.1,542.9 L1228.5,540.7 L1229.8,538.4 L1231.0,536.0 L1231.0,536.0 L1228.8,537.4 L1226.6,538.7 L1224.3,539.9 L1222.0,540.9 L1219.6,541.7 L1217.2,542.5 L1214.8,543.1 L1212.4,543.6 L1209.9,544.0 L1207.4,544.3 L1205.0,544.5 L1202.4,544.6 L1199.9,544.6 L1197.4,544.5 L1194.9,544.3 L1192.3,544.1 L1189.8,543.8 L1187.2,543.5 L1184.7,543.0 L1182.2,542.6 L1179.7,542.1 L1177.2,541.5 L1174.7,540.9 L1172.2,540.3 L1169.7,539.6 L1167.3,538.9 L1164.8,538.2 L1162.4,537.4 L1160.0,536.6 L1157.6,535.7 L1155.2,534.8 L1152.8,533.9 L1150.5,533.0 L1148.2,532.0 L1145.8,530.9 L1143.5,529.9 L1141.2,528.8 L1138.9,527.7 L1136.7,526.6 L1134.4,525.4 L1132.2,524.2 L1130.0,523.0 L1127.7,521.7 L1125.5,520.5 L1123.4,519.2 L1121.2,517.9 L1119.0,516.5 L1116.9,515.2 L1114.8,513.8 L1112.6,512.4 L1110.5,511.0 L1108.4,509.5 L1106.3,508.1 L1104.3,506.6 L1102.2,505.2 L1100.1,503.7 L1098.0,502.2 L1096.0,500.7 L1093.9,499.2 L1091.9,497.7 L1089.8,496.1 L1087.8,494.6 L1085.8,493.1 L1083.7,491.6 L1081.7,490.0 L1079.7,488.5 L1077.7,486.9 L1075.7,485.3 L1073.8,483.7 L1071.8,482.1 L1069.9,480.4 L1068.0,478.7 L1066.2,477.0 L1064.3,475.3 L1062.5,473.5 L1060.8,471.7 L1059.1,469.8 L1057.4,467.9 L1055.7,466.0 L1054.1,464.0 L1052.6,461.9 L1051.1,459.8 Z" fill="#705d56"/>
<path d="M1088.6,422.9 C1094.5,427.3 1110.1,439.7 1123.8,449.2 C1137.5,458.7 1155.9,469.9 1170.6,479.7 C1185.2,489.5 1201.9,500.8 1211.7,507.8 C1221.5,514.8 1225.6,518.0 1229.2,521.9 C1232.8,525.8 1233.4,528.6 1233.4,531.3 C1233.4,534.0 1231.9,536.3 1229.2,538.3 C1226.5,540.2 1223.3,542.0 1217.5,543.0 C1211.7,544.0 1201.9,544.8 1194.1,544.2 C1186.3,543.6 1180.4,542.4 1170.6,539.5 C1160.8,536.6 1147.2,532.7 1135.5,526.6 C1123.8,520.5 1111.0,510.5 1100.3,503.1 C1089.5,495.7 1079.2,489.2 1071.0,482.0 C1062.8,474.8 1054.4,463.5 1051.1,459.8" fill="none"/>
<path d="M1051.1,459.8 C1053.4,466.1 1059.9,487.4 1065.2,497.3 C1070.5,507.2 1072.9,510.3 1082.7,519.5 C1092.5,528.7 1109.2,544.6 1123.8,552.4 C1138.4,560.2 1156.9,565.0 1170.6,566.4 C1184.3,567.8 1197.0,563.7 1205.8,560.6 C1214.6,557.5 1219.2,551.8 1223.4,547.7 C1227.6,543.6 1229.7,538.0 1231.0,536.0" fill="none"/>
<path d="M1068.7,506.9 L1068.2,508.3 L1067.8,509.8 L1067.5,511.2 L1067.1,512.7 L1066.7,514.1 L1066.3,515.6 L1065.9,517.0 L1065.5,518.5 L1065.1,519.9 L1064.7,521.4 L1064.2,522.8 L1063.8,524.3 L1063.4,525.8 L1063.0,527.2 L1062.5,528.7 L1062.1,530.1 L1061.6,531.6 L1061.2,533.0 L1060.7,534.5 L1060.2,536.0 L1059.8,537.4 L1059.3,538.9 L1058.8,540.3 L1058.3,541.8 L1057.8,543.2 L1057.3,544.7 L1056.7,546.1 L1056.2,547.5 L1055.7,549.0 L1055.1,550.4 L1054.6,551.8 L1054.0,553.3 L1053.4,554.7 L1052.8,556.1 L1052.2,557.5 L1051.6,558.9 L1051.0,560.3 L1050.4,561.7 L1049.8,563.1 L1049.1,564.5 L1048.5,565.9 L1047.8,567.2 L1047.2,568.6 L1046.5,570.0 L1045.8,571.3 L1045.1,572.7 L1044.4,574.0 L1043.7,575.3 L1042.9,576.7 L1042.2,578.0 L1041.4,579.3 L1040.7,580.6 L1039.9,581.9 L1039.1,583.2 L1038.3,584.4 L1037.5,585.7 L1036.6,587.0 L1035.8,588.2 L1035.0,589.4 L1034.1,590.7 L1033.2,591.9 L1032.3,593.1 L1031.4,594.3 L1030.5,595.5 L1029.6,596.6 L1028.7,597.8 L1027.7,598.9 L1026.7,600.1 L1025.8,601.2 L1024.8,602.3 L1023.8,603.4 L1022.8,604.5 L1021.7,605.6 L1020.7,606.7 L1019.7,607.7 L1018.6,608.8 L1017.5,609.8 L1016.4,610.9 L1015.4,611.9 L1014.3,612.9 L1013.1,613.9 L1012.0,614.9 L1010.9,615.8 L1009.7,616.8 L1008.6,617.7 L1007.4,618.7 L1006.2,619.6 L1005.0,620.5 L1003.8,621.4 L1002.6,622.3 L1001.4,623.2 L1000.2,624.1 L999.0,624.9 L997.7,625.8 L996.5,626.6 L995.2,627.4 L993.9,628.2 L992.6,629.0 L991.3,629.8 L990.0,630.6 L988.7,631.4 L987.4,632.1 L986.1,632.8 L984.8,633.6 L983.4,634.3 L982.1,635.0 L980.8,635.7 L979.4,636.4 L978.0,637.1 L976.7,637.8 L975.3,638.4 L973.9,639.1 L972.6,639.7 L971.2,640.4 L969.8,641.0 L968.4,641.6 L967.0,642.2 L965.6,642.9 L964.2,643.4 L962.8,644.0 L961.4,644.6 L960.0,645.2 L958.6,645.8 L957.2,646.3 L955.8,646.9 L954.4,647.4 L955.6,650.6 L957.0,650.0 L958.5,649.5 L959.9,648.9 L961.3,648.3 L962.7,647.7 L964.1,647.1 L965.5,646.5 L966.9,645.9 L968.3,645.3 L969.8,644.6 L971.2,644.0 L972.6,643.3 L973.9,642.7 L975.3,642.0 L976.7,641.3 L978.1,640.7 L979.5,640.0 L980.9,639.3 L982.2,638.5 L983.6,637.8 L985.0,637.1 L986.3,636.3 L987.6,635.6 L989.0,634.8 L990.3,634.0 L991.6,633.2 L993.0,632.4 L994.3,631.6 L995.6,630.8 L996.8,630.0 L998.1,629.1 L999.4,628.3 L1000.7,627.4 L1001.9,626.5 L1003.2,625.6 L1004.4,624.7 L1005.6,623.8 L1006.8,622.8 L1008.0,621.9 L1009.2,620.9 L1010.4,620.0 L1011.6,619.0 L1012.7,618.0 L1013.9,617.0 L1015.0,616.0 L1016.2,615.0 L1017.3,613.9 L1018.4,612.9 L1019.5,611.8 L1020.6,610.8 L1021.6,609.7 L1022.7,608.6 L1023.7,607.5 L1024.8,606.4 L1025.8,605.2 L1026.8,604.1 L1027.8,602.9 L1028.8,601.8 L1029.7,600.6 L1030.7,599.4 L1031.6,598.2 L1032.6,597.0 L1033.5,595.8 L1034.4,594.6 L1035.3,593.4 L1036.2,592.1 L1037.0,590.9 L1037.9,589.6 L1038.7,588.3 L1039.5,587.0 L1040.4,585.7 L1041.2,584.4 L1041.9,583.1 L1042.7,581.8 L1043.5,580.5 L1044.2,579.1 L1045.0,577.8 L1045.7,576.4 L1046.4,575.1 L1047.1,573.7 L1047.8,572.4 L1048.5,571.0 L1049.2,569.6 L1049.8,568.2 L1050.5,566.8 L1051.1,565.4 L1051.7,564.0 L1052.4,562.6 L1053.0,561.2 L1053.6,559.7 L1054.2,558.3 L1054.7,556.9 L1055.3,555.4 L1055.9,554.0 L1056.4,552.6 L1056.9,551.1 L1057.5,549.7 L1058.0,548.2 L1058.5,546.7 L1059.0,545.3 L1059.5,543.8 L1060.0,542.4 L1060.5,540.9 L1061.0,539.4 L1061.4,537.9 L1061.9,536.5 L1062.3,535.0 L1062.8,533.5 L1063.2,532.1 L1063.6,530.6 L1064.0,529.1 L1064.4,527.6 L1064.8,526.2 L1065.2,524.7 L1065.6,523.2 L1066.0,521.7 L1066.4,520.3 L1066.7,518.8 L1067.1,517.3 L1067.4,515.9 L1067.8,514.4 L1068.1,512.9 L1068.5,511.5 L1068.8,510.0 L1069.1,508.5 L1069.3,507.1 Z" fill="#000" stroke="none"/>
<path d="M1000,1341 C1015,1346 1028,1350 1036,1355" fill="none" stroke-width="2.5"/>
<path d="M1340,1267 C1355,1270 1370,1273 1380,1275" fill="none" stroke-width="2.5"/>
<path d="M850.3,660.9 L848.9,661.6 L847.5,662.2 L846.2,663.0 L844.8,663.7 L843.5,664.4 L842.2,665.1 L840.8,665.8 L839.5,666.6 L838.2,667.3 L836.9,668.1 L835.5,668.8 L834.2,669.6 L832.9,670.3 L831.6,671.1 L830.3,671.9 L828.9,672.7 L827.6,673.4 L826.3,674.2 L825.0,675.0 L823.7,675.8 L822.4,676.6 L821.1,677.4 L819.8,678.3 L818.5,679.1 L817.3,679.9 L816.0,680.7 L814.7,681.6 L813.4,682.4 L812.2,683.3 L810.9,684.1 L809.7,685.0 L808.4,685.9 L807.2,686.8 L805.9,687.7 L804.7,688.6 L803.5,689.5 L802.3,690.4 L801.0,691.3 L799.8,692.2 L798.6,693.2 L797.4,694.1 L796.3,695.1 L795.1,696.0 L793.9,697.0 L792.8,698.0 L791.6,698.9 L790.5,699.9 L789.3,700.9 L788.2,702.0 L787.1,703.0 L786.0,704.0 L784.9,705.0 L783.8,706.1 L782.7,707.1 L781.6,708.2 L780.5,709.3 L779.5,710.4 L778.4,711.5 L777.4,712.6 L776.4,713.7 L775.4,714.8 L774.4,716.0 L773.4,717.1 L772.4,718.3 L771.4,719.4 L770.5,720.6 L769.5,721.8 L768.6,723.0 L767.7,724.2 L766.7,725.4 L765.8,726.6 L764.9,727.8 L764.0,729.0 L763.1,730.3 L762.2,731.5 L761.3,732.7 L760.5,734.0 L759.6,735.2 L758.7,736.5 L757.9,737.7 L757.0,739.0 L756.1,740.2 L755.3,741.5 L754.4,742.8 L753.6,744.0 L752.7,745.3 L751.9,746.6 L751.0,747.8 L750.2,749.1 L749.3,750.3 L748.5,751.6 L747.6,752.9 L746.8,754.1 L745.9,755.4 L745.1,756.6 L744.2,757.9 L743.3,759.1 L742.5,760.3 L741.6,761.6 L740.7,762.8 L739.8,764.0 L738.9,765.3 L738.0,766.5 L737.1,767.7 L736.2,768.9 L735.3,770.1 L734.4,771.2 L733.4,772.4 L732.5,773.6 L731.6,774.7 L730.6,775.9 L729.6,777.0 L728.6,778.2 L727.6,779.3 L726.6,780.4 L725.6,781.5 L724.6,782.6 L723.6,783.7 L722.5,784.7 L721.4,785.8 L720.4,786.8 L719.3,787.8 L718.2,788.8 L720.4,791.4 L721.6,790.3 L722.7,789.2 L723.8,788.2 L724.9,787.1 L726.0,786.0 L727.0,784.9 L728.1,783.8 L729.1,782.6 L730.1,781.5 L731.1,780.3 L732.1,779.2 L733.1,778.0 L734.1,776.8 L735.0,775.6 L736.0,774.4 L736.9,773.2 L737.8,772.0 L738.8,770.8 L739.7,769.6 L740.6,768.3 L741.5,767.1 L742.4,765.9 L743.2,764.6 L744.1,763.4 L745.0,762.1 L745.9,760.9 L746.7,759.6 L747.6,758.3 L748.4,757.1 L749.3,755.8 L750.1,754.5 L751.0,753.3 L751.8,752.0 L752.7,750.7 L753.5,749.5 L754.3,748.2 L755.2,746.9 L756.0,745.7 L756.9,744.4 L757.7,743.1 L758.5,741.9 L759.4,740.6 L760.2,739.3 L761.1,738.1 L761.9,736.8 L762.8,735.6 L763.6,734.3 L764.5,733.1 L765.4,731.9 L766.2,730.7 L767.1,729.4 L768.0,728.2 L768.9,727.0 L769.8,725.8 L770.7,724.6 L771.6,723.4 L772.5,722.3 L773.5,721.1 L774.4,719.9 L775.4,718.8 L776.3,717.6 L777.3,716.5 L778.3,715.4 L779.3,714.3 L780.3,713.2 L781.3,712.1 L782.3,711.0 L783.4,709.9 L784.4,708.9 L785.5,707.8 L786.5,706.8 L787.6,705.7 L788.7,704.7 L789.8,703.7 L790.9,702.7 L792.0,701.7 L793.1,700.7 L794.2,699.7 L795.4,698.7 L796.5,697.7 L797.7,696.8 L798.8,695.8 L800.0,694.9 L801.2,693.9 L802.4,693.0 L803.6,692.1 L804.7,691.2 L806.0,690.2 L807.2,689.3 L808.4,688.4 L809.6,687.5 L810.8,686.7 L812.1,685.8 L813.3,684.9 L814.5,684.0 L815.8,683.2 L817.0,682.3 L818.3,681.5 L819.6,680.6 L820.8,679.8 L822.1,678.9 L823.4,678.1 L824.6,677.3 L825.9,676.5 L827.2,675.6 L828.5,674.8 L829.8,674.0 L831.1,673.2 L832.4,672.4 L833.7,671.6 L835.0,670.8 L836.3,670.1 L837.6,669.3 L838.9,668.5 L840.2,667.7 L841.5,666.9 L842.8,666.2 L844.1,665.4 L845.4,664.6 L846.7,663.9 L848.0,663.1 L849.3,662.3 L850.5,661.5 Z" fill="#000" stroke="none"/>
<path d="M1083.3,337.9 L1084.5,336.8 L1085.5,335.7 L1086.6,334.5 L1087.6,333.4 L1088.7,332.2 L1089.7,331.1 L1090.7,329.9 L1091.8,328.8 L1092.8,327.6 L1093.8,326.5 L1094.9,325.3 L1095.9,324.2 L1096.9,323.0 L1098.0,321.9 L1099.0,320.7 L1100.0,319.5 L1101.1,318.4 L1102.1,317.2 L1103.1,316.1 L1104.2,314.9 L1105.2,313.8 L1106.2,312.6 L1107.3,311.5 L1108.3,310.3 L1109.3,309.2 L1110.4,308.0 L1111.4,306.9 L1112.5,305.7 L1113.5,304.6 L1114.5,303.4 L1115.6,302.3 L1116.6,301.1 L1117.6,300.0 L1118.7,298.8 L1119.7,297.7 L1120.8,296.5 L1121.8,295.4 L1122.8,294.2 L1120.8,292.4 L1119.7,293.5 L1118.7,294.7 L1117.7,295.9 L1116.7,297.0 L1115.7,298.2 L1114.6,299.4 L1113.6,300.6 L1112.6,301.7 L1111.6,302.9 L1110.6,304.1 L1109.6,305.2 L1108.6,306.4 L1107.5,307.6 L1106.5,308.8 L1105.5,310.0 L1104.5,311.1 L1103.5,312.3 L1102.5,313.5 L1101.5,314.7 L1100.5,315.9 L1099.5,317.0 L1098.5,318.2 L1097.5,319.4 L1096.5,320.6 L1095.5,321.8 L1094.5,323.0 L1093.5,324.2 L1092.5,325.3 L1091.5,326.5 L1090.5,327.7 L1089.5,328.9 L1088.6,330.1 L1087.6,331.3 L1086.6,332.5 L1085.6,333.8 L1084.7,335.0 L1083.7,336.2 L1082.9,337.5 Z" fill="#000" stroke="none"/>
</g>
<g stroke="#000" stroke-linejoin="round" stroke-linecap="round">
<path d="M804.3,505.5 C804.7,503.2 805.5,496.6 806.9,491.8 C808.3,487.0 810.2,481.3 812.8,476.9 C815.4,472.5 818.8,468.7 822.6,465.2 C826.4,461.7 830.7,458.4 835.6,456.0 C840.5,453.6 846.4,451.8 851.8,450.8 C857.2,449.8 863.4,450.1 868.1,450.2 C872.8,450.3 877.3,450.4 879.8,451.3 C882.3,452.2 882.4,453.1 883.1,455.5 C883.8,457.9 884.1,461.4 884.1,465.8 C884.1,470.2 883.8,477.2 883.1,482.1 C882.4,487.0 881.4,491.1 879.8,495.1 C878.2,499.1 876.3,502.9 873.3,506.2 C870.3,509.4 865.7,512.3 861.6,514.6 C857.5,516.9 852.9,518.7 848.6,519.8 C844.3,520.9 840.2,521.5 835.6,521.1 C831.0,520.7 825.6,519.0 821.2,517.2 C816.9,515.4 812.3,512.1 809.5,510.1 C806.7,508.2 805.2,506.3 804.3,505.5" fill="#fff" stroke="none"/>
<path d="M806.0,506.0 C808.3,500.3 813.7,476.6 820.0,472.0 C826.3,467.4 838.6,475.4 844.0,478.2 C849.4,481.0 850.2,485.1 852.5,488.6 C854.8,492.1 856.5,495.4 857.7,499.0 C859.0,502.6 859.8,507.3 860.0,510.1 C860.2,512.9 860.9,514.4 859.0,516.0 C857.1,517.6 852.5,518.9 848.6,519.8 C844.7,520.6 840.2,521.5 835.6,521.1 C831.0,520.7 825.6,519.0 821.2,517.2 C816.9,515.4 812.0,512.0 809.5,510.1 C807.0,508.2 806.6,506.7 806.0,506.0" fill="#d4b8b2" stroke="none"/>
<path d="M806.9,506.8 C807.1,504.8 807.0,499.1 808.0,495.0 C809.0,490.9 810.8,485.9 813.0,482.0 C815.2,478.1 818.4,472.4 821.2,471.7 C824.1,471.0 827.3,476.1 830.0,478.0 C832.7,479.9 835.5,481.1 837.5,483.4 C839.5,485.7 841.0,489.0 842.1,491.8 C843.2,494.6 844.0,497.5 844.0,500.3 C844.0,503.1 843.5,506.5 842.1,508.8 C840.7,511.1 838.2,512.8 835.6,514.0 C833.0,515.2 829.8,516.1 826.5,516.0 C823.2,515.9 819.3,514.8 816.0,513.3 C812.7,511.8 808.4,507.9 806.9,506.8" fill="#705d56" stroke-width="3"/>
<path d="M843.0,477.0 C844.6,478.9 850.0,484.9 852.5,488.6 C855.0,492.3 856.5,495.4 857.7,499.0 C859.0,502.6 859.8,507.1 860.0,510.1 C860.2,513.1 859.2,515.9 859.0,517.0" fill="none" stroke-width="3"/>
<ellipse cx="834.5" cy="471.5" rx="12" ry="9.5" transform="rotate(-45 834.5 471.5)" fill="#fff" stroke-width="3"/>
<path d="M804.3,505.5 C804.7,503.2 805.5,496.6 806.9,491.8 C808.3,487.0 810.2,481.3 812.8,476.9 C815.4,472.5 818.8,468.7 822.6,465.2 C826.4,461.7 830.7,458.4 835.6,456.0 C840.5,453.6 846.4,451.8 851.8,450.8 C857.2,449.8 863.4,450.1 868.1,450.2 C872.8,450.3 877.3,450.4 879.8,451.3 C882.3,452.2 882.4,453.1 883.1,455.5 C883.8,457.9 884.1,461.4 884.1,465.8 C884.1,470.2 883.8,477.2 883.1,482.1 C882.4,487.0 881.4,491.1 879.8,495.1 C878.2,499.1 876.3,502.9 873.3,506.2 C870.3,509.4 865.7,512.3 861.6,514.6 C857.5,516.9 852.9,518.7 848.6,519.8 C844.3,520.9 840.2,521.5 835.6,521.1 C831.0,520.7 825.6,519.0 821.2,517.2 C816.9,515.4 812.3,512.1 809.5,510.1 C806.7,508.2 805.2,506.3 804.3,505.5" fill="none" stroke-width="3.3"/>
<path d="M803.5,505 L805.5,510" stroke-width="2" fill="none"/>
<path d="M877,507 L903,492 M881,498 L895.5,482 M883.7,487 L892,477.5" stroke-width="1.3" fill="none"/>
</g>
</svg>
<div id="top"></div>
<div id="gal">Gallery</div>
<div class="circ" style="left:194px"></div>
<div class="circ" style="left:310px"></div>
<div class="circ" style="left:426px"></div>
<div class="circ" style="left:542px"></div>
<svg width="2048" height="88" style="position:absolute;left:0;top:0">
<g fill="#9e9e9e" stroke="none">
 <!-- wrench -->
 <path d="M212.5,57.5 L229,41" stroke="#9e9e9e" stroke-width="6.5" stroke-linecap="round"/>
 <circle cx="232.6" cy="37.8" r="10.6"/>
 <circle cx="238.6" cy="31.6" r="6.6" fill="#141414"/>
 <!-- wand -->
 <path d="M332,60.5 C330.5,59 330.5,57 332,55.5 L345,42.5 L349.5,47 L336.5,60 C335,61.5 333.5,62 332,60.5 Z"/>
 <path d="M346.8,40.7 L351.5,36 C353,34.5 355,34.5 356.5,36 C358,37.5 358,39.5 356.5,41 L351.3,45.2 Z"/>
 <path d="M335.3,28 L337,34.5 L343.5,36.3 L337,38 L335.3,44.5 L333.6,38 L327,36.3 L333.6,34.5 Z"/>
 <path d="M346.5,26.5 L347.5,30 L350.8,31 L347.5,32 L346.5,35.5 L345.5,32 L342.2,31 L345.5,30 Z"/>
 <!-- selection S -->
 <path d="M452.5,34 C454,31 456,28.5 462,28.5 L471.5,28.5 C474,28.5 474,34 471.5,34 L460,34 C456,34 453,35 452.5,34 Z"/>
 <path d="M451.5,38 C453,37.2 455.5,37 457.5,37.2 C460,40 462.5,44 462.8,47.5 L462.6,50.5 L456.7,50.5 C456,47.5 455,45 453,42.5 C451.5,41 451,39.5 451.5,38 Z"/>
 <path d="M442,56.5 C442,54 444,54 446,54 L462.5,54 C461,57 459,59.5 454,59.5 L445,59.5 C443,59.5 442,58.5 442,56.5 Z"/>
 <!-- transform arrow -->
 <path d="M589.5,28.5 L560.5,42 L571,43.5 L576,56.5 Z"/>
 <path d="M560,58.5 L573,45.5" stroke="#9e9e9e" stroke-width="5" stroke-linecap="round"/>
</g>
<!-- brush -->
<g fill="#3a76f2">
 <path d="M1467.7,19.5 C1469,20 1467,23 1464,27 L1436,53 L1433,51 L1459,25 C1463,21 1466.5,19 1467.7,19.5 Z"/>
 <path d="M1432.5,54.5 C1430,51 1425,52 1422,55.5 C1419,59 1419,63 1412,67 C1418,68 1425,67.5 1429,64 C1433,61 1434,57 1432.5,54.5 Z"/>
</g>
<g fill="#c9c9c9">
 <!-- smudge -->
 <path d="M1592.3,18.4 L1604.1,29.7 L1598.7,36 L1597.7,50 C1597,53 1590,59 1586,60.8 C1582,61.5 1579.4,59.8 1579.4,59.8 L1590.2,48.6 C1591,47.5 1590,46.6 1589,47.5 L1566,69.5 L1560,69.5 C1556.5,68 1556,64 1557,62 L1565.4,49 L1562.3,41 C1561.5,37 1562,35 1564,32 L1571.9,24.3 C1574,23.5 1580,23.5 1586.9,23.8 Z"/>
 <!-- eraser -->
 <path d="M1726,22.5 C1729,19.5 1733,19.5 1736,22.5 L1746.6,33.5 L1718.5,61 L1702.5,45.5 Z"/>
 <path d="M1700.5,47.5 L1716.5,63 L1714,65.5 C1711,68.5 1707,68.5 1704,65.5 L1692.9,54.4 Z"/>
 <!-- layers -->
 <rect x="1848" y="20" width="36" height="36" rx="6"/>
 <rect x="1834.5" y="30.5" width="39" height="39" rx="7.5" fill="#222222"/>
 <rect x="1836" y="32" width="36" height="36" rx="6"/>
</g>
<circle cx="2000" cy="43.8" r="28" fill="#886b50"/>
</svg>
<div id="side"></div>
<div class="slider" style="top:312px;height:340px"></div>
<div class="thumb" style="top:532px"></div>
<div id="sq"></div>
<div class="slider" style="top:822px;height:340px"></div>
<div class="thumb" style="top:824px"></div>
<svg width="80" height="1536" style="position:absolute;left:0;top:0">
<g fill="none" stroke-width="2" stroke-linecap="butt">
<path d="M31.5,1205 L45.5,1205 A10,10 0 0 1 45.5,1225 L28,1225" stroke="#a3a3a3"/>
<path d="M24,1205.5 L32,1198 L32,1213 Z" fill="#a3a3a3" stroke="none"/>
<path d="M52.5,1285 L35.5,1285 A10,10 0 0 0 35.5,1305 L52,1305" stroke="#4a4a4a"/>
<path d="M56,1285.2 L48,1277.5 L48,1292.5 Z" fill="#4a4a4a" stroke="none"/>
</g>
</svg>
</body></html>
